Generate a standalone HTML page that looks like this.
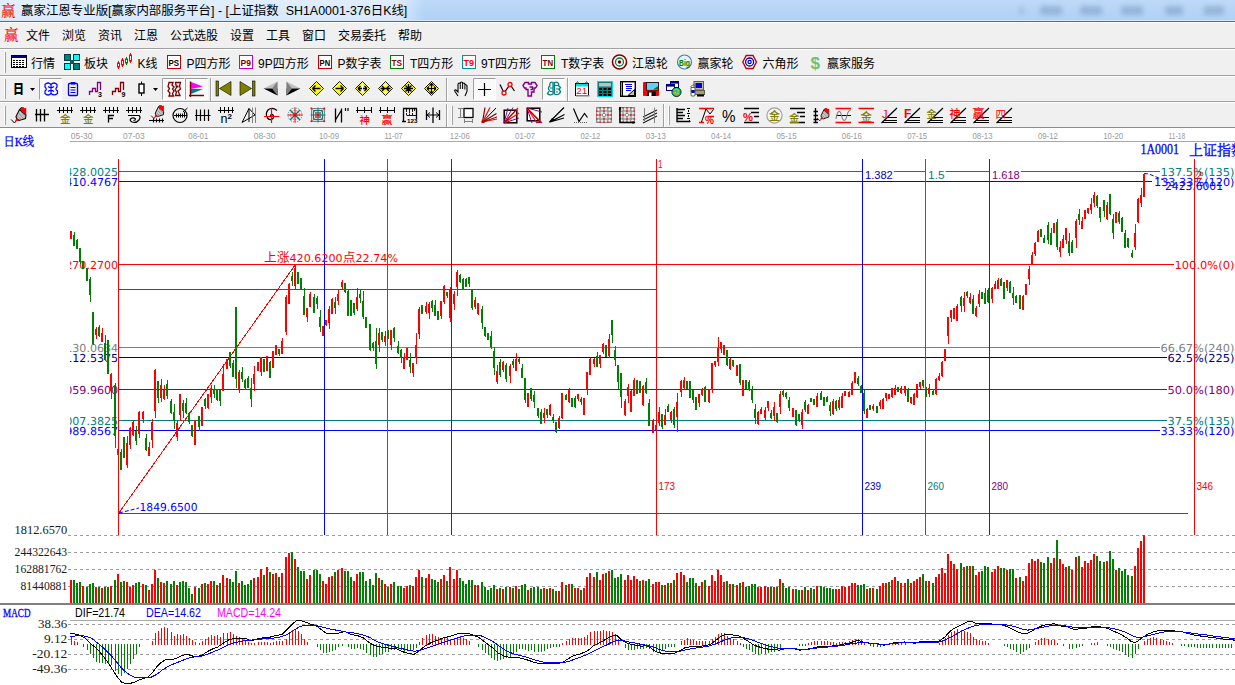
<!DOCTYPE html>
<html lang="zh-CN"><head><meta charset="utf-8"><title>赢家江恩专业版</title>
<style>
*{margin:0;padding:0;box-sizing:border-box}
html,body{width:1235px;height:685px;overflow:hidden;background:#f0f0f0}
body{position:relative;font-family:"Liberation Sans","Noto Sans CJK SC",sans-serif;font-size:12px;color:#000}
.abs{position:absolute}
#title{position:absolute;left:0;top:0;width:1235px;height:21px;background:linear-gradient(180deg,#bedaf8 0%,#b4d3f6 60%,#b2d2f5 100%)}
#title .glow{position:absolute;left:0;top:0;width:424px;height:21px;background:linear-gradient(90deg,rgba(255,255,255,.55) 0%,rgba(255,255,255,.5) 94%,rgba(255,255,255,0) 100%)}
#title .txt{position:absolute;left:21px;top:3px;height:17px;line-height:17px;font-size:12.45px;white-space:pre;color:#000}
#title .ic{position:absolute;left:1px;top:3px;font-size:14.5px;line-height:17px;color:#f00;font-family:"Liberation Serif","Noto Serif CJK SC",serif;font-weight:500}
.blur{position:absolute;top:6px;height:9px;background:#7f9fc6;filter:blur(2.4px);opacity:.6;border-radius:2px}
#tline{position:absolute;left:0;top:20px;width:1235px;height:3px;background:linear-gradient(180deg,#d4e6fa 0,#d4e6fa 33%,#5d6b7b 33%,#5d6b7b 67%,#fff 67%)}
#menu{position:absolute;left:0;top:23px;width:1235px;height:25px;background:#f0f0f0}
#menu span{position:absolute;top:5px;line-height:16px;font-size:12px;white-space:nowrap}
#menu .ic{left:4px;top:3px;font-size:14.5px;line-height:18px;color:#f00;font-family:"Liberation Serif","Noto Serif CJK SC",serif;font-weight:500}
.hl{position:absolute;left:0;width:1235px;height:1px}
.tb{position:absolute;left:0;width:1235px}
.tb .t{position:absolute;top:6px;line-height:16px;font-size:12px;white-space:nowrap}
.tb svg{position:absolute;overflow:visible}
.grip{position:absolute;width:3px;border-left:1px solid #fff;border-right:1px solid #a0a0a0;}
.sep{position:absolute;width:2px;border-left:1px solid #a0a0a0;border-right:1px solid #fff}
.pressed{position:absolute;border:1px solid;border-color:#a0a0a0 #fff #fff #a0a0a0;background:#f8f8f8}
svg.chart{position:absolute;left:0;top:128px}
</style></head><body>
<div id="title"><div class="glow"></div><span class="ic">赢</span><span class="txt">赢家江恩专业版[赢家内部服务平台] - [上证指数  SH1A0001-376日K线]</span>
<div class="blur" style="left:1020px;width:3px"></div>
<div class="blur" style="left:1040px;width:22px"></div>
<div class="blur" style="left:1080px;width:22px"></div>
<div class="blur" style="left:1121px;width:22px"></div>
<div class="blur" style="left:1165px;width:18px"></div>
<div class="blur" style="left:1204px;width:20px"></div>
</div><div id="tline"></div>
<div id="menu"><span class="ic">赢</span>
<span style="left:26px">文件</span>
<span style="left:62px">浏览</span>
<span style="left:98px">资讯</span>
<span style="left:134px">江恩</span>
<span style="left:170px">公式选股</span>
<span style="left:230px">设置</span>
<span style="left:266px">工具</span>
<span style="left:302px">窗口</span>
<span style="left:338px">交易委托</span>
<span style="left:398px">帮助</span>
</div>
<div class="hl" style="top:48px;background:#a0a0a0"></div>
<div class="hl" style="top:49px;background:#ffffff"></div>
<div class="hl" style="top:75px;background:#a0a0a0"></div>
<div class="hl" style="top:76px;background:#ffffff"></div>
<div class="hl" style="top:101px;background:#a0a0a0"></div>
<div class="hl" style="top:102px;background:#ffffff"></div>
<div class="hl" style="top:127px;background:#8c8c8c"></div>
<svg class="tbs" style="position:absolute;left:0;top:49px" width="1235" height="79" viewBox="0 0 1235 79"><path d="M4.5 3V24" stroke="#fff"/><path d="M5.5 3V24" stroke="#a0a0a0"/><path d="M4.5 30V50" stroke="#fff"/><path d="M5.5 30V50" stroke="#a0a0a0"/><path d="M4.5 57V76" stroke="#fff"/><path d="M5.5 57V76" stroke="#a0a0a0"/><g transform="translate(11,6)"><rect x="0.5" y="0.5" width="15" height="12" fill="#fff" stroke="#000"/><rect x="1" y="1" width="14" height="2" fill="#000080"/><rect x="2" y="5" width="2" height="1" fill="#000"/><rect x="2" y="7" width="2" height="1" fill="#000"/><rect x="2" y="9" width="2" height="1" fill="#000"/><rect x="2" y="11" width="2" height="1" fill="#000"/><rect x="5" y="5" width="2" height="1" fill="#000"/><rect x="5" y="7" width="2" height="1" fill="#000"/><rect x="5" y="9" width="2" height="1" fill="#000"/><rect x="5" y="11" width="2" height="1" fill="#000"/><rect x="8" y="5" width="2" height="1" fill="#000"/><rect x="8" y="7" width="2" height="1" fill="#000"/><rect x="8" y="9" width="2" height="1" fill="#000"/><rect x="8" y="11" width="2" height="1" fill="#000"/><rect x="11" y="5" width="2" height="1" fill="#000"/><rect x="11" y="7" width="2" height="1" fill="#000"/><rect x="11" y="9" width="2" height="1" fill="#000"/><rect x="11" y="11" width="2" height="1" fill="#000"/></g><g transform="translate(64,5)"><rect x="0" y="0" width="16" height="16" fill="#00c8c8"/><rect x="0.5" y="0.5" width="6" height="6" fill="#008080" stroke="#003c3c"/><rect x="9.5" y="0.5" width="6" height="6" fill="#00ffff" stroke="#003c3c"/><rect x="0.5" y="9.5" width="6" height="6" fill="#00ffff" stroke="#003c3c"/><rect x="9.5" y="9.5" width="6" height="6" fill="#008080" stroke="#003c3c"/><rect x="7" y="0" width="2" height="16" fill="#f0f0f0"/><rect x="0" y="7" width="16" height="2" fill="#f0f0f0"/><rect x="6" y="6" width="4" height="4" fill="#006060"/></g><g transform="translate(117,4)"><path d="M1.5 8V16" stroke="#f00" stroke-width="1" fill="none"/><rect x="0.5" y="10" width="2" height="4" fill="#fff" stroke="#f00"/><path d="M5.5 5V14" stroke="#f00" stroke-width="1" fill="none"/><rect x="4.5" y="7" width="2" height="5" fill="#fff" stroke="#f00"/><path d="M9.5 4V12" stroke="#008000" stroke-width="1" fill="none"/><rect x="8.5" y="6" width="2" height="4" fill="#fff" stroke="#008000"/><path d="M13.5 0V10" stroke="#f00" stroke-width="1" fill="none"/><rect x="12.5" y="2" width="2" height="6" fill="#fff" stroke="#f00"/></g><g transform="translate(167,6)"><rect x="0.5" y="0.5" width="13" height="13" fill="#fff" stroke="#f00"/><rect x="0.5" y="0.5" width="13" height="13" fill="none" stroke="#000" stroke-opacity=".45" stroke-dasharray="1 1"/><text x="1.6" y="10.5" fill="#000" font-size="8.2" font-family="Liberation Sans, Noto Sans CJK SC, sans-serif" font-weight="700" textLength="10.5" lengthAdjust="spacingAndGlyphs">PS</text></g><g transform="translate(239,6)"><rect x="0.5" y="0.5" width="13" height="13" fill="#fff" stroke="#f0f"/><rect x="0.5" y="0.5" width="13" height="13" fill="none" stroke="#000" stroke-opacity=".45" stroke-dasharray="1 1"/><text x="1.6" y="10.5" fill="#800000" font-size="8.2" font-family="Liberation Sans, Noto Sans CJK SC, sans-serif" font-weight="700" textLength="10.5" lengthAdjust="spacingAndGlyphs">P9</text></g><g transform="translate(318,6)"><rect x="0.5" y="0.5" width="13" height="13" fill="#fff" stroke="#f00"/><rect x="0.5" y="0.5" width="13" height="13" fill="none" stroke="#000" stroke-opacity=".45" stroke-dasharray="1 1"/><text x="1.6" y="10.5" fill="#000" font-size="8.2" font-family="Liberation Sans, Noto Sans CJK SC, sans-serif" font-weight="700" textLength="10.5" lengthAdjust="spacingAndGlyphs">PN</text></g><g transform="translate(390,6)"><rect x="0.5" y="0.5" width="13" height="13" fill="#fff" stroke="#00a000"/><rect x="0.5" y="0.5" width="13" height="13" fill="none" stroke="#000" stroke-opacity=".45" stroke-dasharray="1 1"/><text x="1.6" y="10.5" fill="#800000" font-size="8.2" font-family="Liberation Sans, Noto Sans CJK SC, sans-serif" font-weight="700" textLength="10.5" lengthAdjust="spacingAndGlyphs">TS</text></g><g transform="translate(462,6)"><rect x="0.5" y="0.5" width="13" height="13" fill="#fff" stroke="#00c0c0"/><rect x="0.5" y="0.5" width="13" height="13" fill="none" stroke="#000" stroke-opacity=".45" stroke-dasharray="1 1"/><text x="1.6" y="10.5" fill="#f00" font-size="8.2" font-family="Liberation Sans, Noto Sans CJK SC, sans-serif" font-weight="700" textLength="10.5" lengthAdjust="spacingAndGlyphs">T9</text></g><g transform="translate(541,6)"><rect x="0.5" y="0.5" width="13" height="13" fill="#fff" stroke="#00a000"/><rect x="0.5" y="0.5" width="13" height="13" fill="none" stroke="#000" stroke-opacity=".45" stroke-dasharray="1 1"/><text x="1.6" y="10.5" fill="#800000" font-size="8.2" font-family="Liberation Sans, Noto Sans CJK SC, sans-serif" font-weight="700" textLength="10.5" lengthAdjust="spacingAndGlyphs">TN</text></g><g transform="translate(612,5)"><circle cx="7.5" cy="8" r="7" fill="#fff" stroke="#800000" stroke-width="1.6"/><circle cx="7.5" cy="8" r="4" fill="#fff" stroke="#008040" stroke-width="1.3"/><circle cx="7.5" cy="8" r="1.8" fill="#800000"/></g><g transform="translate(677,5)"><circle cx="7.5" cy="8" r="7" fill="#e8f4f4" stroke="#4080a0" stroke-width="1.2"/><text x="2" y="11.5" fill="#008000" font-size="8.5" font-family="Liberation Sans, Noto Sans CJK SC, sans-serif" font-weight="700" textLength="11" lengthAdjust="spacingAndGlyphs">Big</text></g><g transform="translate(742,5)"><path d="M0.8 8L4.2 1.5H11L14.4 8L11 14.5H4.2Z" fill="#fff" stroke="#c00000" stroke-width="1.4"/><circle cx="7.6" cy="8" r="4" fill="#fff" stroke="#0000c0" stroke-width="1.3"/><circle cx="7.6" cy="8" r="1.6" fill="#fff" stroke="#0000c0" stroke-width="1.2"/></g><g transform="translate(810,5)"><text x="0.5" y="14.5" fill="#70c070" font-size="17" font-family="Liberation Sans, Noto Sans CJK SC, sans-serif" font-weight="700">$</text></g><text x="31" y="18.5" fill="#000" font-size="12" font-family="Liberation Sans, Noto Sans CJK SC, sans-serif" >行情</text><text x="84" y="18.5" fill="#000" font-size="12" font-family="Liberation Sans, Noto Sans CJK SC, sans-serif" >板块</text><text x="137.5" y="18.5" fill="#000" font-size="12" font-family="Liberation Sans, Noto Sans CJK SC, sans-serif" >K线</text><text x="186.5" y="18.5" fill="#000" font-size="12" font-family="Liberation Sans, Noto Sans CJK SC, sans-serif" >P四方形</text><text x="258" y="18.5" fill="#000" font-size="12" font-family="Liberation Sans, Noto Sans CJK SC, sans-serif" >9P四方形</text><text x="337.5" y="18.5" fill="#000" font-size="12" font-family="Liberation Sans, Noto Sans CJK SC, sans-serif" >P数字表</text><text x="410" y="18.5" fill="#000" font-size="12" font-family="Liberation Sans, Noto Sans CJK SC, sans-serif" >T四方形</text><text x="481" y="18.5" fill="#000" font-size="12" font-family="Liberation Sans, Noto Sans CJK SC, sans-serif" >9T四方形</text><text x="561" y="18.5" fill="#000" font-size="12" font-family="Liberation Sans, Noto Sans CJK SC, sans-serif" >T数字表</text><text x="632" y="18.5" fill="#000" font-size="12" font-family="Liberation Sans, Noto Sans CJK SC, sans-serif" >江恩轮</text><text x="697.5" y="18.5" fill="#000" font-size="12" font-family="Liberation Sans, Noto Sans CJK SC, sans-serif" >赢家轮</text><text x="762.5" y="18.5" fill="#000" font-size="12" font-family="Liberation Sans, Noto Sans CJK SC, sans-serif" >六角形</text><text x="827" y="18.5" fill="#000" font-size="12" font-family="Liberation Sans, Noto Sans CJK SC, sans-serif" >赢家服务</text><text x="13" y="43.8" fill="#000" font-size="13" font-family="Liberation Sans, Noto Sans CJK SC, sans-serif" font-weight="900" textLength="11" lengthAdjust="spacingAndGlyphs">日</text><path d="M30 39h5l-2.5 3z" fill="#000"/><rect x="39" y="29" width="23" height="22" fill="#fafafa"/><path d="M39.5 51V29.5H61.5" stroke="#a0a0a0" fill="none"/><path d="M39.5 50.5H61.5V30" stroke="#fff" fill="none"/><g transform="translate(43,32)"><path d="M2 3.5C4 1.5 6 1.5 8 3.5C10 1.5 12 1.5 14 3.5V6C12 8 13 9 14.5 10V12.5C12 14.5 10 14.5 8 12.5C6 14.5 4 14.5 2 12.5V10C3.5 9 4 8 2 6Z" stroke="#00f" stroke-width="1.2" fill="none"/><path d="M5 5.5C7 7 9 7 11 5.5M5 10.5C7 9 9 9 11 10.5M8 3.5V12.5" stroke="#00f" stroke-width="1.1" fill="none"/></g><g transform="translate(66,32)"><path d="M2.5 3.5Q2.5 2.5 3.5 2.5H10.5Q11.5 2.5 11.5 3.5V13.5Q11.5 14.5 10.5 14.5H3.5Q2.5 14.5 2.5 13.5Z" stroke="#00f" stroke-width="1.3" fill="none"/><path d="M5 1.5H9V3H5Z" stroke="#00f" stroke-width="1" fill="none"/><path d="M4.5 6.5H9.5M4.5 9H9.5M4.5 11.5H9.5" stroke="#00f" stroke-width="1.2" fill="none"/></g><g transform="translate(88,32)"><path d="M1.5 14V10.5H4.5V7.5H7.5V10.5H9.5V1.5H12.5V9" stroke="#800080" stroke-width="1.3" fill="none"/><text x="10" y="15.5" fill="#000" font-size="7" font-family="Liberation Sans, Noto Sans CJK SC, sans-serif" font-weight="700">3</text></g><g transform="translate(111,32)"><path d="M1.5 14V10.5H4.5V7.5H7.5V10.5H9.5V1.5H12.5V9" stroke="#800000" stroke-width="1.3" fill="none"/><text x="10.5" y="15.5" fill="#000" font-size="7" font-family="Liberation Sans, Noto Sans CJK SC, sans-serif" font-weight="700">9</text></g><g transform="translate(138,32)"><path d="M3.5 0.5V15" stroke="#000" stroke-width="1" fill="none"/><rect x="1" y="3" width="5" height="9" fill="#fff" stroke="#000" stroke-width="1.4"/></g><path d="M153 39h5l-2.5 3z" fill="#000"/><rect x="162" y="29" width="23" height="22" fill="#fafafa"/><path d="M162.5 51V29.5H184.5" stroke="#a0a0a0" fill="none"/><path d="M162.5 50.5H184.5V30" stroke="#fff" fill="none"/><rect x="185" y="29" width="23" height="22" fill="#fafafa"/><path d="M185.5 51V29.5H207.5" stroke="#a0a0a0" fill="none"/><path d="M185.5 50.5H207.5V30" stroke="#fff" fill="none"/><g transform="translate(166,32)"><path d="M3 1.5H7L6 4L8 6L6.5 8L8 10L6.5 12.5L7.5 15H3L4 12L2 10L3.5 7.5L2 5.5Z" stroke="#800000" stroke-width="1.3" fill="none"/><path d="M9.5 1.5H14.5L13.5 5L14.5 8L12 10L14 14.5H9.5L10.5 11L9 9L10.5 6.5Z" stroke="#800000" stroke-width="1.3" fill="none"/><rect x="10.5" y="4.5" width="2" height="2" fill="#800000"/></g><g transform="translate(189,32)"><path d="M2 1L14 5.5L2 8Z" fill="#ff00ff"/><path d="M2 8L14 8L2 13Z" fill="#008080"/><path d="M1.5 0.5V16M0 14.5H15" stroke="#800000" stroke-width="1.4" fill="none"/></g><path d="M210.5 29V52" stroke="#a0a0a0"/><path d="M211.5 29V52" stroke="#fff"/><g transform="translate(216,32)"><rect x="0" y="0" width="2.5" height="15" fill="#808000" stroke="#000" stroke-width=".6"/><path d="M15 0.5V14.5L3.5 7.5Z" fill="#808000" stroke="#000" stroke-width=".6"/></g><g transform="translate(240,32)"><rect x="12.5" y="0" width="2.5" height="15" fill="#808000" stroke="#000" stroke-width=".6"/><path d="M0 0.5V14.5L11.5 7.5Z" fill="#808000" stroke="#000" stroke-width=".6"/></g><g transform="translate(263,32)"><path d="M14.5 0.5L0.5 7.5L14.5 7.5Z" fill="#c0c0c0"/><path d="M0.5 7.5L14.5 14.5V7.5Z" fill="#000"/><path d="M14.5 0.5V14.5L9 7.5Z" fill="#808080"/></g><g transform="translate(286,32)"><path d="M0.5 0.5L14.5 7.5L0.5 7.5Z" fill="#c0c0c0"/><path d="M14.5 7.5L0.5 14.5V7.5Z" fill="#000"/><path d="M0.5 0.5V14.5L6 7.5Z" fill="#808080"/></g><g transform="translate(308.5,31.5)"><path d="M8 1L15 8L8 15L1 8Z" fill="#ffff00" stroke="#000" stroke-width=".9"/><path d="M4 8H12M4 8l3-3M4 8l3 3" stroke="#000" stroke-width="1.4" fill="none"/></g><g transform="translate(331.5,31.5)"><path d="M8 1L15 8L8 15L1 8Z" fill="#ffff00" stroke="#000" stroke-width=".9"/><path d="M4 8H12M12 8l-3-3M12 8l-3 3" stroke="#000" stroke-width="1.4" fill="none"/></g><g transform="translate(354.5,31.5)"><path d="M8 1L15 8L8 15L1 8Z" fill="#ffff00" stroke="#000" stroke-width=".9"/><path d="M3.5 8H12.5M3.5 8l2.5-2.5M3.5 8l2.5 2.5M12.5 8l-2.5-2.5M12.5 8l-2.5 2.5" stroke="#000" stroke-width="1.4" fill="none"/><path d="M8 3V13" stroke="#fff" stroke-width="1" fill="none"/></g><g transform="translate(377.5,31.5)"><path d="M8 1L15 8L8 15L1 8Z" fill="#ffff00" stroke="#000" stroke-width=".9"/><path d="M3 8H13M7 8l-2.5-2.5M7 8l-2.5 2.5M9 8l2.5-2.5M9 8l2.5 2.5" stroke="#000" stroke-width="1.4" fill="none"/><circle cx="8" cy="4" r="1" fill="#fff"/><circle cx="8" cy="12" r="1" fill="#fff"/></g><g transform="translate(400.5,31.5)"><path d="M8 1L15 8L8 15L1 8Z" fill="#ffff00" stroke="#000" stroke-width=".9"/><path d="M3.5 8H12.5M8 3.5V12.5M5 5L11 11M11 5L5 11" stroke="#000" stroke-width="1.3" fill="none"/></g><g transform="translate(423.5,31.5)"><path d="M8 1L15 8L8 15L1 8Z" fill="#ffff00" stroke="#000" stroke-width=".9"/><path d="M3.5 8H12.5M8 3.5V12.5M8 3l-2 2.2M8 3l2 2.2M8 13l-2-2.2M8 13l2-2.2M3.5 8l2-2M3.5 8l2 2M12.5 8l-2-2M12.5 8l-2 2" stroke="#000" stroke-width="1.2" fill="none"/></g><path d="M446.5 29V52" stroke="#a0a0a0"/><path d="M447.5 29V52" stroke="#fff"/><g transform="translate(453,32)"><path d="M5 15L2 10.5Q1 8.5 3 9L5 11V3.5Q5 2 6.2 2Q7.3 2 7.3 3.5V2.3Q7.3 1 8.5 1Q9.6 1 9.6 2.3V3Q9.6 2 10.8 2Q11.9 2 11.9 3.2V4.5Q11.9 3.5 13 3.7Q14 4 14 5V10.5L12 15" stroke="#000" stroke-width="1.1" fill="none"/><path d="M7.3 3.5V8M9.6 3V8M11.9 4.5V8.5" stroke="#000" stroke-width="1" fill="none"/></g><rect x="473" y="29" width="23" height="22" fill="#fafafa"/><path d="M473.5 51V29.5H495.5" stroke="#a0a0a0" fill="none"/><path d="M473.5 50.5H495.5V30" stroke="#fff" fill="none"/><g transform="translate(477,32)"><path d="M7.5 2V15M1 8.5H14" stroke="#000" stroke-width="1.2" fill="none"/></g><g transform="translate(499,32)"><path d="M1 3.5L5 12L11 3.5L15.5 10" stroke="#000" stroke-width="1.2" fill="none"/><circle cx="5" cy="12" r="2" fill="#fff" stroke="#f00" stroke-width="1.3"/><circle cx="11" cy="3.5" r="2" fill="#fff" stroke="#f00" stroke-width="1.3"/></g><g transform="translate(522,32)"><path d="M3 1.5H6.5V3H9.5V1.5H13L15 4.5L13.5 7H12V11H9.5V15H6V8.5H4V7H2.5L1 4.5Z" stroke="#800080" stroke-width="1.4" fill="none"/><path d="M7.5 6H10.5V8.5H8.5" stroke="#800080" stroke-width="1.3" fill="none"/></g><rect x="542" y="29" width="23" height="22" fill="#fafafa"/><path d="M542.5 51V29.5H564.5" stroke="#a0a0a0" fill="none"/><path d="M542.5 50.5H564.5V30" stroke="#fff" fill="none"/><g transform="translate(546,32)"><path d="M7.5 1.5C5 0.5 3 2 4 4.5C2.5 6 1.5 8 3.5 9.5L1.5 12.5C3 14.5 5 14 7 13V1.5M8.5 1.5C11 0.5 13.5 2 12.5 4.5L14.5 6.5L13 8.5L14.5 10.5C14 13 11.5 14.5 8.5 13Z" stroke="#008080" stroke-width="1.3" fill="none"/><path d="M4 7H7M9 4.5H12M10 8H13M4 10.5H6.5M10 11H12" stroke="#008080" stroke-width="1.1" fill="none"/></g><path d="M567.5 29V52" stroke="#a0a0a0"/><path d="M568.5 29V52" stroke="#fff"/><g transform="translate(575,32)"><rect x="0.5" y="2.5" width="13" height="12" fill="#fff" stroke="#000"/><rect x="1" y="3" width="12" height="2.5" fill="#00e0e0"/><rect x="1" y="14" width="13.5" height="1.5" fill="#808080"/><path d="M2.5 0.5l1.5 2h-3zM11.5 0.5l1.5 2h-3z" fill="#c0c0c0" stroke="#000" stroke-width=".5"/><text x="1.3" y="13.3" fill="#f00" font-size="8.8" font-family="Liberation Sans, Noto Sans CJK SC, sans-serif" textLength="11" lengthAdjust="spacingAndGlyphs">21</text></g><g transform="translate(597,32)"><rect x="0.5" y="0.5" width="15" height="15" fill="#008080" stroke="#00e0e0"/><rect x="2" y="2" width="12" height="3.5" fill="#c0c0c0"/><rect x="2" y="7" width="3" height="2" fill="#000"/><rect x="2" y="10" width="3" height="2" fill="#000"/><rect x="2" y="13" width="3" height="2" fill="#000"/><rect x="6.5" y="7" width="3" height="2" fill="#000"/><rect x="6.5" y="10" width="3" height="2" fill="#000"/><rect x="6.5" y="13" width="3" height="2" fill="#000"/><rect x="11" y="7" width="3" height="2" fill="#000"/><rect x="11" y="10" width="3" height="2" fill="#000"/><rect x="11" y="13" width="3" height="2" fill="#000"/></g><g transform="translate(620,32)"><rect x="0.7" y="0.7" width="14.6" height="14.6" fill="#fff" stroke="#000" stroke-width="1.4"/><path d="M2.5 1V15" stroke="#000" stroke-width="1" fill="none"/><path d="M5 3.5H12M6 5.5H12M6 7.5H12M6 9.5H11" stroke="#00f" stroke-width="1" fill="none"/><path d="M8 14.5L14.5 8.5V14.5Z" stroke="#000" stroke-width="1" fill="#c0c0c0"/></g><g transform="translate(643,32)"><rect x="0" y="1" width="16" height="14" rx="1" fill="#f00"/><rect x="3.5" y="1.5" width="12" height="7.5" fill="#fff" stroke="#000" stroke-width=".8"/><path d="M4 2H15V5L11 8.5H4Z" fill="#60d0ff"/><path d="M15 5V8.5H10Z" fill="#008000"/><rect x="4" y="10.5" width="9" height="4.5" fill="#000"/><rect x="6" y="11.5" width="2.5" height="3.5" fill="#fff"/></g><g transform="translate(666,32)"><rect x="4.5" y="0.5" width="8" height="6" fill="#fff" stroke="#000080"/><rect x="5" y="1" width="7" height="1.6" fill="#000080"/><rect x="0.5" y="3.5" width="8" height="6" fill="#fff" stroke="#000080"/><rect x="1" y="4" width="7" height="1.6" fill="#000080"/><circle cx="10.5" cy="11" r="4.6" fill="#00c0c0" stroke="#000" stroke-width=".8"/><path d="M8 9.5L10.5 8L12.5 9.5L11.5 12L13 13.5M7 12L9.5 11.5L10.5 14" stroke="#c0c000" stroke-width="1.4" fill="none"/></g><g transform="translate(689,32)"><rect x="5" y="0.5" width="9.5" height="8.5" fill="#c0c0a0" stroke="#606040"/><rect x="6.5" y="2" width="6.5" height="5" fill="#0000e0"/><rect x="4" y="9.5" width="11.5" height="4" fill="#a0a080" stroke="#606040"/><rect x="8" y="13.5" width="7" height="2" fill="#000"/><path d="M2 6.5H6V14.5Q4 16 2 14.5Z" fill="#fff" stroke="#606040"/><rect x="2.3" y="9" width="3.4" height="3" fill="#0000c0"/><path d="M1.5 6L4 3.5L6 5" stroke="#606040" fill="none"/></g><g transform="translate(11,58)"><path d="M8.5 2.5L15 8L14.5 11.5L8 13.5L5.5 11.5L5 9.5Z" fill="#c4c4c4" stroke="#000" stroke-width="1.1"/><path d="M7.5 6L12 11M9.5 4.5L14 9.5M6.5 9L10 12.5" stroke="#8a8a8a" stroke-width=".8"/><path d="M8.5 2.5L10.5 0.3L12.5 0L13.2 1.2L15.2 0.8V8Z" fill="#f00"/><path d="M8.5 2.5L10.5 0.3" stroke="#000" stroke-width="1"/><path d="M5.3 11.3L8 13.5L3.8 14.8Z" fill="#f00"/><path d="M0.2 12.5L3.5 16L4.6 14.4" stroke="#000" stroke-width="1" fill="none"/></g><g transform="translate(34,58)"><path d="M2.5 2V14.5M6.5 2V14.5M10.5 2V14.5M1 7.5H15" stroke="#000" stroke-width="1.3" fill="none"/></g><g transform="translate(57,58)"><path d="M0 3.5H16" stroke="#000" stroke-width="1" fill="none"/><path d="M2.5 0V6" stroke="#000" stroke-width="1" fill="none"/><path d="M6.5 0V6" stroke="#000" stroke-width="1" fill="none"/><path d="M10.5 0V6" stroke="#000" stroke-width="1" fill="none"/><path d="M14.5 0V6" stroke="#000" stroke-width="1" fill="none"/><text x="3" y="16" fill="#808000" font-size="10.5" font-family="Liberation Sans, Noto Sans CJK SC, sans-serif" font-weight="500">金</text></g><g transform="translate(80,58)"><path d="M0 3.5H16" stroke="#000" stroke-width="1" fill="none"/><path d="M2.5 0V6" stroke="#000" stroke-width="1" fill="none"/><path d="M6.5 0V6" stroke="#000" stroke-width="1" fill="none"/><path d="M10.5 0V6" stroke="#000" stroke-width="1" fill="none"/><path d="M14.5 0V6" stroke="#000" stroke-width="1" fill="none"/><text x="3" y="16" fill="#808000" font-size="10.5" font-family="Liberation Sans, Noto Sans CJK SC, sans-serif" font-weight="500">金</text></g><g transform="translate(103,58)"><path d="M0 3.5H16" stroke="#000" stroke-width="1" fill="none"/><path d="M2.5 0V6" stroke="#000" stroke-width="1" fill="none"/><path d="M6.5 0V6" stroke="#000" stroke-width="1" fill="none"/><path d="M10.5 0V6" stroke="#000" stroke-width="1" fill="none"/><path d="M14.5 0V6" stroke="#000" stroke-width="1" fill="none"/><path d="M5.5 15.5V8.5H11M5.5 11.5H10" stroke="#000" stroke-width="1.3" fill="none"/></g><g transform="translate(126,58)"><path d="M0 3.5H16" stroke="#000" stroke-width="1" fill="none"/><path d="M2.5 0V6" stroke="#000" stroke-width="1" fill="none"/><path d="M6.5 0V6" stroke="#000" stroke-width="1" fill="none"/><path d="M10.5 0V6" stroke="#000" stroke-width="1" fill="none"/><path d="M14.5 0V6" stroke="#000" stroke-width="1" fill="none"/><path d="M2 8.5H13Q15 10 13 13Q10 16.5 6 15Q3 13.5 5 11.5Q7.5 10 9.5 12Q9.5 13.5 7.5 13.5" stroke="#000" stroke-width="1.2" fill="none"/></g><g transform="translate(149,57)"><g transform="translate(2,-1) scale(.85)"><path d="M8.5 2.5L15 8L14.5 11.5L8 13.5L5.5 11.5L5 9.5Z" fill="#c4c4c4" stroke="#000" stroke-width="1.1"/><path d="M7.5 6L12 11M9.5 4.5L14 9.5M6.5 9L10 12.5" stroke="#8a8a8a" stroke-width=".8"/><path d="M8.5 2.5L10.5 0.3L12.5 0L13.2 1.2L15.2 0.8V8Z" fill="#f00"/><path d="M8.5 2.5L10.5 0.3" stroke="#000" stroke-width="1"/><path d="M5.3 11.3L8 13.5L3.8 14.8Z" fill="#f00"/><path d="M0.2 12.5L3.5 16L4.6 14.4" stroke="#000" stroke-width="1" fill="none"/></g><path d="M0 14.5H15M4.5 12.5V16.5M7.5 12.5V16.5M10.5 12.5V16.5M13.5 12.5V16.5" stroke="#000" stroke-width="1.1" fill="none"/></g><g transform="translate(172,58)"><circle cx="8" cy="8.5" r="7" fill="none" stroke="#000" stroke-width="1.2"/><path d="M2 8.5H15M4.5 6.5V10.5M6.5 6.5V10.5M8.5 6.5V10.5M10.5 6.5V10.5M12.5 5V10.5M11 5L15.5 1" stroke="#000" stroke-width="1" fill="none"/></g><g transform="translate(195,58)"><path d="M1.5 2.5V14M5.5 2.5V14M9.5 2.5V14M13.5 2.5V14M0 8.5H15.5" stroke="#000" stroke-width="1.2" fill="none"/></g><g transform="translate(218,58)"><path d="M0 3.5H16" stroke="#000" stroke-width="1" fill="none"/><path d="M2.5 0V6" stroke="#000" stroke-width="1" fill="none"/><path d="M6.5 0V6" stroke="#000" stroke-width="1" fill="none"/><path d="M10.5 0V6" stroke="#000" stroke-width="1" fill="none"/><path d="M14.5 0V6" stroke="#000" stroke-width="1" fill="none"/><text x="2.5" y="15.5" fill="#000" font-size="12.5" font-family="Liberation Sans, Noto Sans CJK SC, sans-serif" >n</text><text x="9.5" y="12" fill="#000" font-size="8" font-family="Liberation Sans, Noto Sans CJK SC, sans-serif" font-weight="700">2</text></g><g transform="translate(241,58)"><path d="M1 15.5L8 1.5L14 8L1 15.5M8 1.5V15" stroke="#000" stroke-width="1" fill="none"/><path d="M11.5 0.5V16M14.5 0.5V16" stroke="#808080" stroke-width="1" fill="none"/></g><g transform="translate(264,58)"><path d="M13 3.5Q8 -0.5 4 3Q1 6.5 3.5 11Q6 14 9 11.5Q10.5 9 8.5 7.5Q6.5 7 6.5 9" stroke="#000" stroke-width="1.2" fill="none"/><path d="M0 9.5H15.5M7.5 1V16" stroke="#f00" stroke-width="1.2" fill="none"/></g><g transform="translate(287,58)"><circle cx="8" cy="8" r="7" fill="none" stroke="#008080" stroke-width=".8" stroke-dasharray="1 1"/><circle cx="8" cy="8" r="4.5" fill="none" stroke="#f00" stroke-width=".8" stroke-dasharray="1 1"/><circle cx="8" cy="8" r="2" fill="none" stroke="#008080" stroke-width=".8" stroke-dasharray="1 1"/><path d="M0.5 8H15.5M8 0.5V15.5" stroke="#f00" stroke-width="1" fill="none"/><path d="M3 3L13 13M13 3L3 13" stroke="#008080" stroke-width="1.4" fill="none"/><rect x="6.5" y="6.5" width="3" height="3" fill="#f00"/></g><g transform="translate(310,58)"><rect x="1.5" y="1.5" width="13" height="13" fill="#d8d8d8" stroke="#808080"/><rect x="3.5" y="3.5" width="9" height="9" fill="none" stroke="#008080"/><rect x="5.5" y="5.5" width="5" height="5" fill="none" stroke="#808080"/><path d="M0.5 8H15.5M8 0.5V15.5" stroke="#008080" stroke-width="1" fill="none"/><path d="M1.5 1.5L14.5 14.5M14.5 1.5L1.5 14.5" stroke="#808080" stroke-width="0.8" fill="none"/><rect x="6.5" y="6.5" width="3" height="3" fill="#f00"/><rect x="0.5" y="0.5" width="1.6" height="1.6" fill="#f00"/><rect x="0.5" y="13.5" width="1.6" height="1.6" fill="#f00"/><rect x="13.5" y="0.5" width="1.6" height="1.6" fill="#f00"/><rect x="13.5" y="13.5" width="1.6" height="1.6" fill="#f00"/></g><g transform="translate(333,58)"><path d="M2.5 1.5V15.5M2.5 13L8.5 3M8.5 1.5V15.5" stroke="#000" stroke-width="1.3" fill="none"/><path d="M12.5 1V4M15 1V4" stroke="#000" stroke-width="1.2" fill="none"/></g><g transform="translate(356,58)"><path d="M0 3.5H16" stroke="#000" stroke-width="1" fill="none"/><path d="M1.5 0V6" stroke="#000" stroke-width="1" fill="none"/><path d="M8.5 0V6" stroke="#000" stroke-width="1" fill="none"/><path d="M15.5 0V6" stroke="#000" stroke-width="1" fill="none"/><text x="3.5" y="16.5" fill="#f00" font-size="10.5" font-family="Liberation Sans, Noto Sans CJK SC, sans-serif" font-weight="500">神</text></g><g transform="translate(379,58)"><path d="M0 3.5H16" stroke="#000" stroke-width="1" fill="none"/><path d="M1.5 0V6" stroke="#000" stroke-width="1" fill="none"/><path d="M8.5 0V6" stroke="#000" stroke-width="1" fill="none"/><path d="M15.5 0V6" stroke="#000" stroke-width="1" fill="none"/><text x="2.5" y="16.5" fill="#f00" font-size="11" font-family="Liberation Sans, Noto Sans CJK SC, sans-serif" font-weight="500">赢</text></g><g transform="translate(402,58)"><path d="M1 1.5H15M1.5 1.5V15M14.5 1.5V12M0 14.5H4" stroke="#000" stroke-width="1.3" fill="none"/><path d="M4.5 2V5M7.5 2V6M10.5 2V5M4.5 8.5H14M4.5 6V8M7.5 6.5V8M10.5 6V8M12.5 2V4" stroke="#000" stroke-width="0.9" fill="none"/><text x="5" y="15.8" fill="#000" font-size="5.5" font-family="Liberation Sans, Noto Sans CJK SC, sans-serif" font-weight="700" textLength="10.5" lengthAdjust="spacingAndGlyphs">123</text></g><g transform="translate(425,58)"><path d="M1.5 3V13M14.5 3V13M8 0.5V16" stroke="#000" stroke-width="1.3" fill="none"/><path d="M2 8H14M2 8l3-2.5M2 8l3 2.5M14 8l-3-2.5M14 8l-3 2.5" stroke="#000" stroke-width="1" fill="none"/></g><path d="M446.5 55V78" stroke="#a0a0a0"/><path d="M447.5 55V78" stroke="#fff"/><path d="M451.5 57V76" stroke="#fff"/><path d="M452.5 57V76" stroke="#a0a0a0"/><g transform="translate(458,58)"><rect x="6" y="1.5" width="9" height="9" fill="#fff" stroke="#000" stroke-width="1.3"/><path d="M0 1.5H5M0 10.5H5M2.5 1.5V10.5M6.5 12V16M14.5 12V16M6.5 14.5H14.5" stroke="#808080" stroke-width="1" fill="none"/></g><g transform="translate(481,58)"><path d="M1.5 15L15 1" stroke="#000" stroke-width="1" fill="none"/><path d="M1.5 15L4 0.5M1.5 15L15.5 6.5" stroke="#800000" stroke-width="1.2" fill="none"/><path d="M1.5 15L9 0.5M1.5 15L16 12" stroke="#f00" stroke-width="1.2" fill="none"/><path d="M1.5 15L16 10" stroke="#800000" stroke-width="1" fill="none"/><rect x="0.5" y="13.5" width="3" height="2.5" fill="#c00000"/></g><g transform="translate(503,58)"><rect x="1.2" y="3.2" width="12.6" height="12.6" fill="#fff" stroke="#000" stroke-width="1.5"/><path d="M1 16L5 1M1 16L16 11M1 16L10 0.5" stroke="#800080" stroke-width="1" fill="none"/><path d="M1 16L15 1M1 16L16 6" stroke="#f00" stroke-width="1.2" fill="none"/><path d="M1 16L13 3" stroke="#800000" stroke-width="1" fill="none"/></g><g transform="translate(526,58)"><rect x="1.2" y="1.2" width="12.6" height="12.6" fill="#fff" stroke="#000" stroke-width="1.5"/><path d="M1 1L6 16M1 1L16 5M10 15.5H16" stroke="#800080" stroke-width="1" fill="none"/><path d="M1 1L16 16M1 1L11 16" stroke="#f00" stroke-width="1.2" fill="none"/><path d="M1 1L14 15" stroke="#800000" stroke-width="1" fill="none"/></g><g transform="translate(549,58)"><path d="M0.5 15L15 0.5M1 15L15.5 7.5M1 15L15 11" stroke="#000" stroke-width="1.2" fill="none"/><path d="M0 16L5.5 12.5L3 11Z" fill="#000"/></g><g transform="translate(572,58)"><path d="M1.5 1.5L7 14.5L12.5 6.5L15.5 10.5" stroke="#000" stroke-width="1.2" fill="none"/><path d="M1 15.5H16" stroke="#606060" stroke-width="1" fill="none"/><path d="M1 15.5H16" stroke="#f0f0f0" stroke-dasharray="1 1"/></g><g transform="translate(596,58)"><rect x="0.5" y="0.5" width="15" height="15" fill="#e4e4e4" stroke="#909090"/><path d="M4 0.5V15.5M8 0.5V15.5M12 0.5V15.5M0.5 4H15.5M0.5 8H15.5M0.5 12H15.5" stroke="#808080" stroke-width="1" fill="none"/><rect x="7.3" y="0.10000000000000009" width="1.4" height="1.4" fill="#f00"/><rect x="0.10000000000000009" y="7.3" width="1.4" height="1.4" fill="#f00"/><rect x="14.5" y="7.3" width="1.4" height="1.4" fill="#f00"/><rect x="7.3" y="14.5" width="1.4" height="1.4" fill="#f00"/><rect x="7.3" y="3.3" width="1.4" height="1.4" fill="#f00"/><rect x="3.3" y="7.3" width="1.4" height="1.4" fill="#f00"/><rect x="11.3" y="7.3" width="1.4" height="1.4" fill="#f00"/><rect x="7.3" y="11.3" width="1.4" height="1.4" fill="#f00"/><rect x="7.3" y="7.3" width="1.4" height="1.4" fill="#f00"/><rect x="3.3" y="0.10000000000000009" width="1.4" height="1.4" fill="#f00"/><rect x="11.3" y="0.10000000000000009" width="1.4" height="1.4" fill="#f00"/><rect x="3.3" y="14.5" width="1.4" height="1.4" fill="#f00"/><rect x="11.3" y="14.5" width="1.4" height="1.4" fill="#f00"/><rect x="0.10000000000000009" y="3.3" width="1.4" height="1.4" fill="#f00"/><rect x="0.10000000000000009" y="11.3" width="1.4" height="1.4" fill="#f00"/><rect x="14.5" y="3.3" width="1.4" height="1.4" fill="#f00"/><rect x="14.5" y="11.3" width="1.4" height="1.4" fill="#f00"/><circle cx="2.5" cy="2.5" r="1.6" fill="#fff" stroke="#707070" stroke-width=".7"/><circle cx="13.5" cy="2.5" r="1.6" fill="#fff" stroke="#707070" stroke-width=".7"/><circle cx="2.5" cy="13.5" r="1.6" fill="#fff" stroke="#707070" stroke-width=".7"/><circle cx="13.5" cy="13.5" r="1.6" fill="#fff" stroke="#707070" stroke-width=".7"/><circle cx="8" cy="8" r="1.6" fill="#fff" stroke="#707070" stroke-width=".7"/></g><g transform="translate(619,58)"><rect x="0.5" y="0.5" width="15" height="15" fill="#e4e4e4" stroke="#909090"/><path d="M4 0.5V15.5M8 0.5V15.5M12 0.5V15.5M0.5 4H15.5M0.5 8H15.5M0.5 12H15.5" stroke="#808080" stroke-width="1" fill="none"/><rect x="7.3" y="0.10000000000000009" width="1.4" height="1.4" fill="#f00"/><rect x="0.10000000000000009" y="7.3" width="1.4" height="1.4" fill="#f00"/><rect x="14.5" y="7.3" width="1.4" height="1.4" fill="#f00"/><rect x="7.3" y="14.5" width="1.4" height="1.4" fill="#f00"/><rect x="7.3" y="3.3" width="1.4" height="1.4" fill="#f00"/><rect x="3.3" y="7.3" width="1.4" height="1.4" fill="#f00"/><rect x="11.3" y="7.3" width="1.4" height="1.4" fill="#f00"/><rect x="7.3" y="11.3" width="1.4" height="1.4" fill="#f00"/><rect x="7.3" y="7.3" width="1.4" height="1.4" fill="#f00"/><rect x="3.3" y="0.10000000000000009" width="1.4" height="1.4" fill="#f00"/><rect x="11.3" y="0.10000000000000009" width="1.4" height="1.4" fill="#f00"/><rect x="3.3" y="14.5" width="1.4" height="1.4" fill="#f00"/><rect x="11.3" y="14.5" width="1.4" height="1.4" fill="#f00"/><rect x="0.10000000000000009" y="3.3" width="1.4" height="1.4" fill="#f00"/><rect x="0.10000000000000009" y="11.3" width="1.4" height="1.4" fill="#f00"/><rect x="14.5" y="3.3" width="1.4" height="1.4" fill="#f00"/><rect x="14.5" y="11.3" width="1.4" height="1.4" fill="#f00"/><circle cx="2.5" cy="2.5" r="1.6" fill="#fff" stroke="#707070" stroke-width=".7"/><circle cx="13.5" cy="2.5" r="1.6" fill="#fff" stroke="#707070" stroke-width=".7"/><circle cx="2.5" cy="13.5" r="1.6" fill="#fff" stroke="#707070" stroke-width=".7"/><circle cx="13.5" cy="13.5" r="1.6" fill="#fff" stroke="#707070" stroke-width=".7"/><circle cx="8" cy="8" r="1.6" fill="#fff" stroke="#707070" stroke-width=".7"/><path d="M1 0V15.5H16" stroke="#000" stroke-width="1.4" fill="none"/><path d="M1 -0.5l-1.5 3h3zM16.5 15.5l-3-1.5v3z" fill="#000"/></g><g transform="translate(642,58)"><path d="M1 10L15 3M1 13L15 6M1 16L15 9" stroke="#202020" stroke-width="1.2" fill="none"/><path d="M2.5 1V14M12.5 0.5V16" stroke="#808080" stroke-width="1" fill="none"/></g><path d="M663.5 55V78" stroke="#a0a0a0"/><path d="M664.5 55V78" stroke="#fff"/><path d="M668.5 57V76" stroke="#fff"/><path d="M669.5 57V76" stroke="#a0a0a0"/><g transform="translate(675,58)"><path d="M2 1V14.5H15M2 2.5H10M2 5.5H8M2 8.5H10M2 11.5H8" stroke="#000" stroke-width="1.4" fill="none"/><path d="M12 1.5H15M13.5 3V5M12 6.5H15M13.5 8V10M12 11.5H15M14 13l1.5 1.5" stroke="#000" stroke-width="1" fill="none"/></g><g transform="translate(698,58)"><path d="M1 1.5H16M1 15.5H6M10 9.5H16" stroke="#f00" stroke-width="1.3" fill="none"/><path d="M3.5 15L8 2L12 7L15.5 2.5" stroke="#000" stroke-width="1" fill="none"/><text x="7" y="16.5" fill="#f00" font-size="10" font-family="Liberation Sans, Noto Sans CJK SC, sans-serif" font-weight="700" textLength="9" lengthAdjust="spacingAndGlyphs">%</text></g><g transform="translate(722,58)"><text x="0" y="15" fill="#000" font-size="16" font-family="Liberation Sans, Noto Sans CJK SC, sans-serif" textLength="13.5" lengthAdjust="spacingAndGlyphs">%</text></g><g transform="translate(743,58)"><path d="M1 1.5H16M8 5.5H16M11 9.5H16M1 15.5H16" stroke="#000" stroke-width="1.4" fill="none"/><text x="0" y="14" fill="#f00" font-size="10.5" font-family="Liberation Sans, Noto Sans CJK SC, sans-serif" font-weight="700" textLength="10" lengthAdjust="spacingAndGlyphs">%</text></g><g transform="translate(766,58)"><circle cx="8.5" cy="8.5" r="7.6" fill="#f6f6f6" stroke="#a0a0a0" stroke-width="1.2"/><text x="3" y="13" fill="#808000" font-size="11" font-family="Liberation Sans, Noto Sans CJK SC, sans-serif" font-weight="500">金</text></g><g transform="translate(789,58)"><path d="M1 1.5H16M8 5.5H16M11 9.5H16M1 15.5H16" stroke="#000" stroke-width="1.4" fill="none"/><text x="0" y="14.5" fill="#808000" font-size="10.5" font-family="Liberation Sans, Noto Sans CJK SC, sans-serif" font-weight="500">金</text></g><g transform="translate(813,58)"><path d="M2.5 1V16M0.5 4.5H5M0.5 8.5H5M0.5 12.5H5M0.5 15.5H5" stroke="#000" stroke-width="1.3" fill="none"/><g transform="translate(4,1) scale(.8)"><path d="M8.5 2.5L15 8L14.5 11.5L8 13.5L5.5 11.5L5 9.5Z" fill="#c4c4c4" stroke="#000" stroke-width="1.1"/><path d="M7.5 6L12 11M9.5 4.5L14 9.5M6.5 9L10 12.5" stroke="#8a8a8a" stroke-width=".8"/><path d="M8.5 2.5L10.5 0.3L12.5 0L13.2 1.2L15.2 0.8V8Z" fill="#f00"/><path d="M8.5 2.5L10.5 0.3" stroke="#000" stroke-width="1"/><path d="M5.3 11.3L8 13.5L3.8 14.8Z" fill="#f00"/><path d="M0.2 12.5L3.5 16L4.6 14.4" stroke="#000" stroke-width="1" fill="none"/></g></g><g transform="translate(835,58)"><path d="M0.5 1.5H16M0.5 15.5H16" stroke="#f00" stroke-width="1.4" fill="none"/><path d="M1 8.5H16" stroke="#000" stroke-width="1" fill="none"/><path d="M1 12C2.5 3 5 2 6.5 8.5C8 15 10.5 15 12 8.5C13 4 14.5 3 16 3" stroke="#808080" stroke-width="1.1" fill="none"/></g><g transform="translate(858,58)"><path d="M0.5 1.5H16M0.5 15.5H16" stroke="#f00" stroke-width="1.4" fill="none"/><text x="2.5" y="13.5" fill="#808000" font-size="11.5" font-family="Liberation Sans, Noto Sans CJK SC, sans-serif" font-weight="500">金</text></g><g transform="translate(881,58)"><path d="M0.5 16L16 1M3 13.5H16M0.5 15.5H16M6 10.5H16" stroke="#000" stroke-width="1.2" fill="none"/><text x="1" y="10.5" fill="#f00" font-size="11" font-family="Liberation Sans, Noto Sans CJK SC, sans-serif" font-weight="400">J</text></g><g transform="translate(904,58)"><path d="M0.5 16L16 1M3 13.5H16M0.5 15.5H16M6 10.5H16" stroke="#000" stroke-width="1.2" fill="none"/><text x="0" y="10.5" fill="#f00" font-size="12" font-family="Liberation Sans, Noto Sans CJK SC, sans-serif" font-weight="700">F</text></g><g transform="translate(927,58)"><path d="M0.5 16L16 1M3 13.5H16M0.5 15.5H16M6 10.5H16" stroke="#000" stroke-width="1.2" fill="none"/><text x="-0.5" y="10.5" fill="#808000" font-size="10" font-family="Liberation Sans, Noto Sans CJK SC, sans-serif" font-weight="500">金</text></g><g transform="translate(950,58)"><path d="M0.5 16L16 1M3 13.5H16M0.5 15.5H16M6 10.5H16" stroke="#000" stroke-width="1.2" fill="none"/><text x="-0.5" y="10.5" fill="#f00" font-size="11" font-family="Liberation Sans, Noto Sans CJK SC, sans-serif" font-weight="500">神</text></g><g transform="translate(973,58)"><path d="M0.5 16L16 1M3 13.5H16M0.5 15.5H16M6 10.5H16" stroke="#000" stroke-width="1.2" fill="none"/><text x="-0.5" y="10.5" fill="#f00" font-size="12" font-family="Liberation Sans, Noto Sans CJK SC, sans-serif" font-weight="500">赢</text></g><g transform="translate(996,58)"><path d="M0.5 16L16 1M3 13.5H16M0.5 15.5H16M6 10.5H16" stroke="#000" stroke-width="1.2" fill="none"/><text x="-0.5" y="10.5" fill="#f00" font-size="10.5" font-family="Liberation Sans, Noto Sans CJK SC, sans-serif" font-weight="400">四</text></g></svg>


<svg class="chart" width="1235" height="557" viewBox="0 128 1235 557" shape-rendering="crispEdges">
<rect x="0" y="128" width="1235" height="557" fill="#fff"/>
<g font-family="Liberation Sans, sans-serif" font-size="8.8" fill="#9a9a9a" shape-rendering="auto">
<text x="70.8" y="138.8" textLength="21.7" lengthAdjust="spacingAndGlyphs">05-30</text>
<text x="123.0" y="138.8" textLength="21.7" lengthAdjust="spacingAndGlyphs">07-03</text>
<text x="188.3" y="138.8" textLength="20.0" lengthAdjust="spacingAndGlyphs">08-01</text>
<text x="253.7" y="138.8" textLength="21.7" lengthAdjust="spacingAndGlyphs">08-30</text>
<text x="319.0" y="138.8" textLength="20.0" lengthAdjust="spacingAndGlyphs">10-09</text>
<text x="384.4" y="138.8" textLength="18.3" lengthAdjust="spacingAndGlyphs">11-07</text>
<text x="449.8" y="138.8" textLength="20.0" lengthAdjust="spacingAndGlyphs">12-06</text>
<text x="515.1" y="138.8" textLength="20.0" lengthAdjust="spacingAndGlyphs">01-07</text>
<text x="580.4" y="138.8" textLength="20.0" lengthAdjust="spacingAndGlyphs">02-12</text>
<text x="645.8" y="138.8" textLength="20.0" lengthAdjust="spacingAndGlyphs">03-13</text>
<text x="711.1" y="138.8" textLength="20.0" lengthAdjust="spacingAndGlyphs">04-14</text>
<text x="776.5" y="138.8" textLength="20.0" lengthAdjust="spacingAndGlyphs">05-15</text>
<text x="841.8" y="138.8" textLength="20.0" lengthAdjust="spacingAndGlyphs">06-16</text>
<text x="907.2" y="138.8" textLength="20.0" lengthAdjust="spacingAndGlyphs">07-15</text>
<text x="972.5" y="138.8" textLength="20.0" lengthAdjust="spacingAndGlyphs">08-13</text>
<text x="1037.9" y="138.8" textLength="20.0" lengthAdjust="spacingAndGlyphs">09-12</text>
<text x="1103.2" y="138.8" textLength="20.0" lengthAdjust="spacingAndGlyphs">10-20</text>
<text x="1168.6" y="138.8" textLength="16.6" lengthAdjust="spacingAndGlyphs">11-18</text>
</g>
<rect x="70" y="141" width="1165" height="1" fill="#a8a8a8"/>
<line x1="68" x2="1235" y1="535.5" y2="535.5" stroke="#9c9c9c" stroke-dasharray="3 3"/>
<line x1="68" x2="1235" y1="552.5" y2="552.5" stroke="#9c9c9c" stroke-dasharray="3 3"/>
<line x1="68" x2="1235" y1="569.5" y2="569.5" stroke="#9c9c9c" stroke-dasharray="3 3"/>
<line x1="68" x2="1235" y1="586.5" y2="586.5" stroke="#9c9c9c" stroke-dasharray="3 3"/>
<line x1="68" x2="1235" y1="624.5" y2="624.5" stroke="#9c9c9c" stroke-dasharray="3 3"/>
<line x1="68" x2="1235" y1="639.5" y2="639.5" stroke="#9c9c9c" stroke-dasharray="3 3"/>
<line x1="68" x2="1235" y1="654.5" y2="654.5" stroke="#9c9c9c" stroke-dasharray="3 3"/>
<line x1="68" x2="1235" y1="669.5" y2="669.5" stroke="#9c9c9c" stroke-dasharray="3 3"/>
<rect x="0" y="603" width="1235" height="2" fill="#808080"/>
<rect x="70" y="620" width="1165" height="1" fill="#a8a8a8"/>
<defs><clipPath id="cl"><rect x="70" y="128" width="60" height="420"/></clipPath></defs>
<rect x="118" y="171" width="1042" height="1" fill="#008080"/>
<rect x="118" y="181" width="1034" height="1" fill="#0000ff"/>
<rect x="118" y="264" width="1056" height="1" fill="#ff0000"/>
<rect x="118" y="347" width="1042" height="1" fill="#808080"/>
<rect x="118" y="357" width="1049" height="1" fill="#000080"/>
<rect x="118" y="389" width="1049" height="1" fill="#800080"/>
<rect x="118" y="420" width="1049" height="1" fill="#008080"/>
<rect x="118" y="430" width="1042" height="1" fill="#0000ff"/>
<rect x="118" y="289" width="538" height="1" fill="#ff0000"/>
<rect x="118" y="513" width="1070" height="1" fill="#ff0000"/>
<g font-family="DejaVu Sans, sans-serif" font-size="11" text-rendering="geometricPrecision" shape-rendering="auto">
<text x="1160.5" y="176" fill="#008080" textLength="74" lengthAdjust="spacingAndGlyphs">137.5%(135)</text>
<text x="58.2" y="176" fill="#008080" textLength="60" lengthAdjust="spacingAndGlyphs" clip-path="url(#cl)">2428.0025</text>
<text x="1154.0" y="186" fill="#0000ff" textLength="80.5" lengthAdjust="spacingAndGlyphs">133.33%(120)</text>
<text x="58.2" y="186" fill="#0000ff" textLength="60" lengthAdjust="spacingAndGlyphs" clip-path="url(#cl)">2410.4767</text>
<text x="1174.5" y="269" fill="#ff0000" textLength="60" lengthAdjust="spacingAndGlyphs">100.0%(0)</text>
<text x="58.2" y="269" fill="#ff0000" textLength="60" lengthAdjust="spacingAndGlyphs" clip-path="url(#cl)">2270.2700</text>
<text x="1160.5" y="352" fill="#808080" textLength="74" lengthAdjust="spacingAndGlyphs">66.67%(240)</text>
<text x="58.2" y="352" fill="#808080" textLength="60" lengthAdjust="spacingAndGlyphs" clip-path="url(#cl)">2130.0634</text>
<text x="1167.5" y="362" fill="#000080" textLength="67" lengthAdjust="spacingAndGlyphs">62.5%(225)</text>
<text x="58.2" y="362" fill="#000080" textLength="60" lengthAdjust="spacingAndGlyphs" clip-path="url(#cl)">2112.5375</text>
<text x="1167.5" y="394" fill="#800080" textLength="67" lengthAdjust="spacingAndGlyphs">50.0%(180)</text>
<text x="58.2" y="394" fill="#800080" textLength="60" lengthAdjust="spacingAndGlyphs" clip-path="url(#cl)">2059.9600</text>
<text x="1167.5" y="425" fill="#008080" textLength="67" lengthAdjust="spacingAndGlyphs">37.5%(135)</text>
<text x="58.2" y="425" fill="#008080" textLength="60" lengthAdjust="spacingAndGlyphs" clip-path="url(#cl)">2007.3825</text>
<text x="1160.5" y="435" fill="#0000ff" textLength="74" lengthAdjust="spacingAndGlyphs">33.33%(120)</text>
<text x="58.2" y="435" fill="#0000ff" textLength="60" lengthAdjust="spacingAndGlyphs" clip-path="url(#cl)">1989.8567</text>
<text x="1165" y="190" fill="#0000ff" textLength="58" lengthAdjust="spacingAndGlyphs">2423.6001</text>
<text x="139.5" y="511" fill="#0000ff" textLength="58" lengthAdjust="spacingAndGlyphs">1849.6500</text>
</g>
<rect x="118" y="159" width="1" height="376" fill="#ff0000"/>
<rect x="324" y="159" width="1" height="376" fill="#0000ff"/>
<rect x="387" y="159" width="1" height="376" fill="#008080"/>
<rect x="451" y="159" width="1" height="376" fill="#800080"/>
<rect x="656" y="159" width="1" height="376" fill="#ff0000"/>
<rect x="862" y="159" width="1" height="376" fill="#0000ff"/>
<rect x="925" y="159" width="1" height="376" fill="#008080"/>
<rect x="989" y="159" width="1" height="376" fill="#800080"/>
<rect x="1194" y="159" width="1" height="376" fill="#ff0000"/>
<line x1="118.5" y1="513.5" x2="295.5" y2="264.5" stroke="#ff0000" stroke-width="1" shape-rendering="crispEdges"/>
<line x1="119" y1="513" x2="139" y2="508" stroke="#0000ff" stroke-dasharray="4 2" shape-rendering="auto"/>
<polyline points="1144,173.5 1149,174 1165,180.5" fill="none" stroke="#0000ff" stroke-dasharray="4 2" shape-rendering="auto"/>
<g font-family="Liberation Sans, sans-serif" font-size="11" shape-rendering="auto">
<text x="658" y="168.3" fill="#ff0000" textLength="4.5" lengthAdjust="spacingAndGlyphs">1</text>
<text x="658.5" y="490" fill="#ff0000" textLength="16.5" lengthAdjust="spacingAndGlyphs">173</text>
<rect x="863" y="168" width="30.8" height="12" fill="#fff"/>
<text x="865" y="179.3" fill="#0000c0" textLength="27.8" lengthAdjust="spacingAndGlyphs">1.382</text>
<text x="864.5" y="490" fill="#0000c0" textLength="16.5" lengthAdjust="spacingAndGlyphs">239</text>
<rect x="926" y="168" width="19.6" height="12" fill="#fff"/>
<text x="928" y="179.3" fill="#008080" textLength="16.6" lengthAdjust="spacingAndGlyphs">1.5</text>
<text x="927.5" y="490" fill="#008080" textLength="16.5" lengthAdjust="spacingAndGlyphs">260</text>
<rect x="990" y="168" width="30.8" height="12" fill="#fff"/>
<text x="992" y="179.3" fill="#800080" textLength="27.8" lengthAdjust="spacingAndGlyphs">1.618</text>
<text x="991.5" y="490" fill="#800080" textLength="16.5" lengthAdjust="spacingAndGlyphs">280</text>
<text x="1196.5" y="490" fill="#ff0000" textLength="16.5" lengthAdjust="spacingAndGlyphs">346</text>
</g>
<text x="1196" y="178.6" fill="#ff0000" font-family="DejaVu Sans, sans-serif" font-size="10.5" shape-rendering="auto">2</text>
<text x="264" y="262" fill="#ff0000" font-family="DejaVu Sans, Noto Sans CJK SC, sans-serif" font-size="10.5" textLength="134" lengthAdjust="spacingAndGlyphs" shape-rendering="auto"><tspan font-size="12">上涨</tspan>420.6200<tspan font-size="12">点</tspan>22.74%</text>
<path d="M74 232h1v14h-1zM73 235h2v11h-2zM77 239h1v10h-1zM76 240h2v9h-2zM80 248h1v16h-1zM79 248h2v14h-2zM83 261h1v8h-1zM82 261h2v8h-2zM87 268h1v13h-1zM86 268h2v13h-2zM90 277h1v25h-1zM89 279h2v16h-2zM93 312h1v33h-1zM92 312h2v32h-2zM99 325h1v12h-1zM98 327h2v9h-2zM105 335h1v26h-1zM104 343h2v17h-2zM108 340h1v34h-1zM107 340h2v34h-2zM115 383h1v65h-1zM114 385h2v51h-2zM121 449h1v21h-1zM120 452h2v18h-2zM124 437h1v21h-1zM123 437h2v21h-2zM136 426h1v19h-1zM135 431h2v10h-2zM146 434h1v17h-1zM145 438h2v12h-2zM158 381h1v22h-1zM157 381h2v17h-2zM167 380h1v19h-1zM166 384h2v12h-2zM171 399h1v15h-1zM170 401h2v12h-2zM174 404h1v25h-1zM173 412h2v8h-2zM183 400h1v18h-1zM182 403h2v8h-2zM186 398h1v16h-1zM185 403h2v10h-2zM189 412h1v12h-1zM188 413h2v9h-2zM192 425h1v12h-1zM191 425h2v11h-2zM199 416h1v15h-1zM198 416h2v11h-2zM205 398h1v11h-1zM204 399h2v7h-2zM214 385h1v13h-1zM213 389h2v5h-2zM217 389h1v12h-1zM216 389h2v11h-2zM220 389h1v17h-1zM219 390h2v11h-2zM230 352h1v16h-1zM229 352h2v14h-2zM233 360h1v17h-1zM232 363h2v14h-2zM236 307h1v81h-1zM235 307h2v72h-2zM242 367h1v15h-1zM241 372h2v7h-2zM245 379h1v11h-1zM244 380h2v8h-2zM248 376h1v12h-1zM247 378h2v10h-2zM251 378h1v29h-1zM250 388h2v11h-2zM264 359h1v13h-1zM263 359h2v13h-2zM270 361h1v17h-1zM269 362h2v16h-2zM279 349h1v7h-1zM278 349h2v5h-2zM292 272h1v14h-1zM291 276h2v5h-2zM298 272h1v12h-1zM297 272h2v12h-2zM301 278h1v11h-1zM300 278h2v11h-2zM304 288h1v27h-1zM303 296h2v19h-2zM314 294h1v19h-1zM313 297h2v16h-2zM317 296h1v13h-1zM316 298h2v6h-2zM320 310h1v22h-1zM319 317h2v10h-2zM335 297h1v17h-1zM334 302h2v6h-2zM345 283h1v10h-1zM344 283h2v9h-2zM348 289h1v27h-1zM347 291h2v25h-2zM351 300h1v16h-1zM350 300h2v16h-2zM354 303h1v12h-1zM353 303h2v10h-2zM360 290h1v13h-1zM359 294h2v4h-2zM363 291h1v28h-1zM362 301h2v16h-2zM366 317h1v11h-1zM365 317h2v11h-2zM370 324h1v27h-1zM369 324h2v26h-2zM373 342h1v9h-1zM372 343h2v5h-2zM376 328h1v41h-1zM375 341h2v23h-2zM382 332h1v10h-1zM381 332h2v8h-2zM388 330h1v9h-1zM387 332h2v6h-2zM394 327h1v15h-1zM393 328h2v10h-2zM398 341h1v13h-1zM397 346h2v7h-2zM401 349h1v14h-1zM400 350h2v8h-2zM410 353h1v20h-1zM409 360h2v7h-2zM422 305h1v9h-1zM421 305h2v9h-2zM432 300h1v12h-1zM431 301h2v7h-2zM435 300h1v16h-1zM434 305h2v11h-2zM438 311h1v9h-1zM437 311h2v9h-2zM447 292h1v6h-1zM446 292h2v4h-2zM460 274h1v9h-1zM459 275h2v7h-2zM463 278h1v11h-1zM462 279h2v10h-2zM466 278h1v9h-1zM465 279h2v8h-2zM469 277h1v10h-1zM468 277h2v7h-2zM472 289h1v21h-1zM471 289h2v19h-2zM482 306h1v23h-1zM481 309h2v14h-2zM485 327h1v10h-1zM484 327h2v9h-2zM488 333h1v7h-1zM487 333h2v7h-2zM491 331h1v18h-1zM490 336h2v11h-2zM494 347h1v28h-1zM493 351h2v17h-2zM500 359h1v18h-1zM499 362h2v13h-2zM506 363h1v19h-1zM505 365h2v14h-2zM513 359h1v9h-1zM512 361h2v4h-2zM519 358h1v6h-1zM518 359h2v3h-2zM522 364h1v14h-1zM521 368h2v10h-2zM525 378h1v25h-1zM524 378h2v22h-2zM531 388h1v13h-1zM530 388h2v11h-2zM534 391h1v17h-1zM533 395h2v7h-2zM538 408h1v10h-1zM537 408h2v8h-2zM541 409h1v15h-1zM540 412h2v12h-2zM547 409h1v9h-1zM546 409h2v6h-2zM553 414h1v9h-1zM552 417h2v4h-2zM556 422h1v11h-1zM555 422h2v10h-2zM566 394h1v6h-1zM565 395h2v5h-2zM572 398h1v9h-1zM571 398h2v9h-2zM575 396h1v12h-1zM574 398h2v9h-2zM581 397h1v8h-1zM580 399h2v3h-2zM597 352h1v15h-1zM596 356h2v11h-2zM606 345h1v12h-1zM605 345h2v12h-2zM612 320h1v23h-1zM611 320h2v15h-2zM615 346h1v20h-1zM614 350h2v10h-2zM618 365h1v24h-1zM617 365h2v17h-2zM621 373h1v35h-1zM620 373h2v24h-2zM637 380h1v14h-1zM636 380h2v14h-2zM640 381h1v12h-1zM639 381h2v12h-2zM646 378h1v16h-1zM645 382h2v11h-2zM649 399h1v27h-1zM648 403h2v23h-2zM662 414h1v15h-1zM661 414h2v13h-2zM668 404h1v8h-1zM667 406h2v6h-2zM674 407h1v21h-1zM673 409h2v16h-2zM687 381h1v8h-1zM686 381h2v8h-2zM690 381h1v17h-1zM689 381h2v17h-2zM693 390h1v13h-1zM692 390h2v10h-2zM696 397h1v13h-1zM695 397h2v13h-2zM705 386h1v16h-1zM704 387h2v15h-2zM727 350h1v16h-1zM726 350h2v15h-2zM733 360h1v7h-1zM732 360h2v6h-2zM740 364h1v21h-1zM739 364h2v19h-2zM746 380h1v9h-1zM745 380h2v9h-2zM749 380h1v11h-1zM748 382h2v8h-2zM752 386h1v17h-1zM751 390h2v10h-2zM755 404h1v20h-1zM754 409h2v9h-2zM771 410h1v9h-1zM770 413h2v5h-2zM777 413h1v10h-1zM776 413h2v9h-2zM783 389h1v8h-1zM782 391h2v4h-2zM786 392h1v7h-1zM785 393h2v4h-2zM789 397h1v14h-1zM788 400h2v8h-2zM796 410h1v16h-1zM795 410h2v15h-2zM799 414h1v8h-1zM798 414h2v6h-2zM805 400h1v12h-1zM804 402h2v8h-2zM811 398h1v4h-1zM810 398h2v4h-2zM814 399h1v6h-1zM813 399h2v6h-2zM821 391h1v9h-1zM820 393h2v7h-2zM824 397h1v9h-1zM823 397h2v9h-2zM827 396h1v6h-1zM826 397h2v5h-2zM830 402h1v14h-1zM829 405h2v6h-2zM836 400h1v11h-1zM835 401h2v8h-2zM858 376h1v10h-1zM857 378h2v6h-2zM861 385h1v8h-1zM860 386h2v7h-2zM864 390h1v24h-1zM863 393h2v18h-2zM870 405h1v5h-1zM869 405h2v5h-2zM877 406h1v7h-1zM876 406h2v7h-2zM898 387h1v5h-1zM897 387h2v5h-2zM908 388h1v14h-1zM907 389h2v13h-2zM923 380h1v8h-1zM922 380h2v6h-2zM926 387h1v10h-1zM925 390h2v7h-2zM933 389h1v6h-1zM932 391h2v4h-2zM961 296h1v16h-1zM960 297h2v9h-2zM967 291h1v7h-1zM966 292h2v4h-2zM973 295h1v19h-1zM972 299h2v15h-2zM982 292h1v7h-1zM981 292h2v7h-2zM985 288h1v16h-1zM984 293h2v11h-2zM988 288h1v15h-1zM987 290h2v12h-2zM1001 278h1v8h-1zM1000 279h2v7h-2zM1004 282h1v17h-1zM1003 282h2v17h-2zM1010 281h1v12h-1zM1009 282h2v11h-2zM1013 287h1v18h-1zM1012 293h2v5h-2zM1016 295h1v8h-1zM1015 296h2v7h-2zM1020 295h1v14h-1zM1019 295h2v14h-2zM1041 229h1v8h-1zM1040 229h2v8h-2zM1044 235h1v8h-1zM1043 238h2v5h-2zM1048 222h1v22h-1zM1047 225h2v15h-2zM1051 228h1v17h-1zM1050 233h2v12h-2zM1057 219h1v31h-1zM1056 222h2v25h-2zM1069 233h1v23h-1zM1068 241h2v12h-2zM1072 240h1v13h-1zM1071 242h2v11h-2zM1079 209h1v16h-1zM1078 214h2v6h-2zM1097 195h1v13h-1zM1096 196h2v10h-2zM1100 207h1v15h-1zM1099 207h2v11h-2zM1104 200h1v17h-1zM1103 200h2v11h-2zM1110 194h1v21h-1zM1109 194h2v20h-2zM1113 214h1v25h-1zM1112 219h2v14h-2zM1119 211h1v13h-1zM1118 213h2v9h-2zM1122 217h1v15h-1zM1121 218h2v14h-2zM1125 230h1v18h-1zM1124 233h2v15h-2zM1128 238h1v10h-1zM1127 238h2v9h-2zM1132 250h1v8h-1zM1131 253h2v4h-2z" fill="#008000"/>
<path d="M71 231h1v8h-1zM70 231h2v8h-2zM96 327h1v12h-1zM95 329h2v6h-2zM102 328h1v14h-1zM101 333h2v9h-2zM111 373h1v26h-1zM110 374h2v17h-2zM118 448h1v7h-1zM117 449h2v6h-2zM127 436h1v32h-1zM126 443h2v22h-2zM130 427h1v22h-1zM129 428h2v17h-2zM133 420h1v16h-1zM132 422h2v13h-2zM139 411h1v27h-1zM138 412h2v22h-2zM143 411h1v12h-1zM142 412h2v7h-2zM149 442h1v14h-1zM148 447h2v9h-2zM152 419h1v29h-1zM151 422h2v18h-2zM155 369h1v49h-1zM154 370h2v41h-2zM161 379h1v23h-1zM160 385h2v13h-2zM164 385h1v15h-1zM163 390h2v9h-2zM177 421h1v20h-1zM176 423h2v14h-2zM180 394h1v27h-1zM179 394h2v21h-2zM195 420h1v25h-1zM194 420h2v25h-2zM202 407h1v19h-1zM201 407h2v19h-2zM208 394h1v15h-1zM207 394h2v14h-2zM211 385h1v18h-1zM210 388h2v9h-2zM223 364h1v27h-1zM222 374h2v17h-2zM227 359h1v10h-1zM226 359h2v10h-2zM239 370h1v23h-1zM238 372h2v17h-2zM254 366h1v25h-1zM253 374h2v10h-2zM258 362h1v9h-1zM257 362h2v9h-2zM261 357h1v19h-1zM260 357h2v15h-2zM267 356h1v15h-1zM266 356h2v15h-2zM273 351h1v17h-1zM272 351h2v17h-2zM276 345h1v10h-1zM275 345h2v10h-2zM282 338h1v16h-1zM281 341h2v13h-2zM286 295h1v40h-1zM285 297h2v35h-2zM289 283h1v21h-1zM288 284h2v20h-2zM295 265h1v24h-1zM294 268h2v18h-2zM307 308h1v14h-1zM306 308h2v9h-2zM310 292h1v15h-1zM309 294h2v13h-2zM323 326h1v10h-1zM322 326h2v10h-2zM326 320h1v6h-1zM325 320h2v5h-2zM329 306h1v23h-1zM328 309h2v14h-2zM332 298h1v16h-1zM331 299h2v15h-2zM338 289h1v16h-1zM337 294h2v7h-2zM342 280h1v9h-1zM341 282h2v5h-2zM357 288h1v23h-1zM356 297h2v12h-2zM379 328h1v24h-1zM378 333h2v12h-2zM385 331h1v15h-1zM384 336h2v6h-2zM391 330h1v20h-1zM390 330h2v15h-2zM404 353h1v16h-1zM403 357h2v12h-2zM407 348h1v12h-1zM406 348h2v12h-2zM413 363h1v14h-1zM412 363h2v10h-2zM416 333h1v31h-1zM415 345h2v13h-2zM419 307h1v32h-1zM418 309h2v25h-2zM426 302h1v12h-1zM425 306h2v6h-2zM429 302h1v17h-1zM428 304h2v9h-2zM441 301h1v18h-1zM440 301h2v15h-2zM444 285h1v19h-1zM443 286h2v16h-2zM450 287h1v35h-1zM449 290h2v28h-2zM454 291h1v19h-1zM453 294h2v10h-2zM457 270h1v26h-1zM456 272h2v15h-2zM475 297h1v12h-1zM474 300h2v7h-2zM478 303h1v12h-1zM477 303h2v11h-2zM497 365h1v19h-1zM496 371h2v11h-2zM503 361h1v11h-1zM502 362h2v8h-2zM510 364h1v19h-1zM509 366h2v10h-2zM516 353h1v18h-1zM515 359h2v12h-2zM528 393h1v14h-1zM527 393h2v14h-2zM544 408h1v15h-1zM543 413h2v5h-2zM550 404h1v12h-1zM549 405h2v10h-2zM559 416h1v13h-1zM558 418h2v10h-2zM562 393h1v26h-1zM561 393h2v25h-2zM569 388h1v15h-1zM568 390h2v12h-2zM578 394h1v7h-1zM577 394h2v5h-2zM584 398h1v17h-1zM583 398h2v17h-2zM587 372h1v23h-1zM586 372h2v17h-2zM590 358h1v17h-1zM589 359h2v16h-2zM594 358h1v9h-1zM593 359h2v5h-2zM600 355h1v13h-1zM599 355h2v9h-2zM603 343h1v11h-1zM602 344h2v8h-2zM609 334h1v24h-1zM608 339h2v17h-2zM625 399h1v17h-1zM624 401h2v14h-2zM628 384h1v19h-1zM627 387h2v9h-2zM631 390h1v22h-1zM630 391h2v21h-2zM634 378h1v18h-1zM633 380h2v16h-2zM643 385h1v21h-1zM642 386h2v19h-2zM653 419h1v14h-1zM652 420h2v13h-2zM656 425h1v5h-1zM655 425h2v5h-2zM659 407h1v19h-1zM658 412h2v11h-2zM665 409h1v16h-1zM664 415h2v10h-2zM671 411h1v12h-1zM670 412h2v8h-2zM677 393h1v39h-1zM676 402h2v15h-2zM681 380h1v17h-1zM680 381h2v11h-2zM684 377h1v13h-1zM683 380h2v8h-2zM699 394h1v13h-1zM698 394h2v9h-2zM702 388h1v8h-1zM701 390h2v5h-2zM709 389h1v14h-1zM708 389h2v13h-2zM712 363h1v30h-1zM711 363h2v27h-2zM715 361h1v6h-1zM714 361h2v4h-2zM718 337h1v29h-1zM717 348h2v14h-2zM721 342h1v11h-1zM720 342h2v7h-2zM724 345h1v10h-1zM723 345h2v10h-2zM730 358h1v12h-1zM729 359h2v10h-2zM737 365h1v11h-1zM736 365h2v11h-2zM743 380h1v16h-1zM742 380h2v16h-2zM758 411h1v14h-1zM757 412h2v12h-2zM761 407h1v7h-1zM760 409h2v5h-2zM765 407h1v13h-1zM764 410h2v8h-2zM768 401h1v10h-1zM767 401h2v7h-2zM774 402h1v19h-1zM773 407h2v9h-2zM780 391h1v23h-1zM779 394h2v13h-2zM793 408h1v9h-1zM792 408h2v9h-2zM802 409h1v20h-1zM801 412h2v13h-2zM808 404h1v10h-1zM807 405h2v9h-2zM817 393h1v14h-1zM816 396h2v11h-2zM833 399h1v16h-1zM832 401h2v13h-2zM839 397h1v13h-1zM838 400h2v8h-2zM842 393h1v15h-1zM841 396h2v12h-2zM845 391h1v5h-1zM844 391h2v5h-2zM849 391h1v6h-1zM848 392h2v5h-2zM852 381h1v14h-1zM851 383h2v12h-2zM855 372h1v11h-1zM854 372h2v11h-2zM867 408h1v10h-1zM866 409h2v9h-2zM873 404h1v7h-1zM872 406h2v3h-2zM880 400h1v9h-1zM879 402h2v4h-2zM883 398h1v11h-1zM882 399h2v10h-2zM886 393h1v8h-1zM885 393h2v5h-2zM889 394h1v5h-1zM888 394h2v5h-2zM892 388h1v10h-1zM891 388h2v9h-2zM895 385h1v10h-1zM894 388h2v7h-2zM901 386h1v8h-1zM900 388h2v5h-2zM905 386h1v10h-1zM904 386h2v7h-2zM911 397h1v7h-1zM910 397h2v6h-2zM914 393h1v12h-1zM913 394h2v11h-2zM917 384h1v14h-1zM916 384h2v13h-2zM920 382h1v7h-1zM919 382h2v5h-2zM929 384h1v13h-1zM928 388h2v6h-2zM936 378h1v17h-1zM935 379h2v15h-2zM939 373h1v8h-1zM938 376h2v4h-2zM942 361h1v16h-1zM941 362h2v14h-2zM945 349h1v12h-1zM944 349h2v12h-2zM948 317h1v27h-1zM947 317h2v19h-2zM951 310h1v12h-1zM950 310h2v8h-2zM954 308h1v11h-1zM953 308h2v11h-2zM957 304h1v17h-1zM956 306h2v15h-2zM964 292h1v20h-1zM963 298h2v8h-2zM970 293h1v11h-1zM969 297h2v6h-2zM976 306h1v11h-1zM975 308h2v8h-2zM979 290h1v17h-1zM978 294h2v10h-2zM992 287h1v16h-1zM991 288h2v11h-2zM995 281h1v8h-1zM994 284h2v5h-2zM998 278h1v11h-1zM997 280h2v9h-2zM1007 280h1v11h-1zM1006 280h2v8h-2zM1023 295h1v15h-1zM1022 296h2v14h-2zM1026 284h1v11h-1zM1025 284h2v11h-2zM1029 266h1v19h-1zM1028 269h2v10h-2zM1032 252h1v13h-1zM1031 255h2v9h-2zM1035 242h1v14h-1zM1034 243h2v11h-2zM1038 230h1v12h-1zM1037 231h2v11h-2zM1054 223h1v10h-1zM1053 223h2v10h-2zM1060 241h1v16h-1zM1059 247h2v5h-2zM1063 235h1v13h-1zM1062 239h2v9h-2zM1066 228h1v16h-1zM1065 228h2v12h-2zM1076 219h1v29h-1zM1075 221h2v17h-2zM1082 217h1v12h-1zM1081 221h2v8h-2zM1085 210h1v9h-1zM1084 210h2v9h-2zM1088 208h1v6h-1zM1087 208h2v5h-2zM1091 198h1v16h-1zM1090 204h2v6h-2zM1094 192h1v15h-1zM1093 195h2v8h-2zM1107 202h1v18h-1zM1106 205h2v14h-2zM1116 212h1v11h-1zM1115 212h2v11h-2zM1135 224h1v26h-1zM1134 233h2v14h-2zM1138 198h1v25h-1zM1137 199h2v23h-2zM1141 188h1v19h-1zM1140 195h2v8h-2zM1144 173h1v24h-1zM1143 174h2v23h-2z" fill="#ff0000"/>
<path d="M73 580h2v23h-2zM76 583h2v20h-2zM79 582h2v21h-2zM86 587h2v16h-2zM89 584h2v19h-2zM92 583h2v20h-2zM98 587h2v16h-2zM104 587h2v16h-2zM107 587h2v16h-2zM114 580h2v23h-2zM120 582h2v21h-2zM123 581h2v22h-2zM135 583h2v20h-2zM138 582h2v21h-2zM145 585h2v18h-2zM157 578h2v25h-2zM166 581h2v22h-2zM170 584h2v19h-2zM173 581h2v22h-2zM179 582h2v21h-2zM182 581h2v22h-2zM185 582h2v21h-2zM188 588h2v15h-2zM191 594h2v9h-2zM198 588h2v15h-2zM204 583h2v20h-2zM213 581h2v22h-2zM219 583h2v20h-2zM229 579h2v24h-2zM232 582h2v21h-2zM235 571h2v32h-2zM241 581h2v22h-2zM244 585h2v18h-2zM247 584h2v19h-2zM250 580h2v23h-2zM263 575h2v28h-2zM269 572h2v31h-2zM278 577h2v26h-2zM291 552h2v51h-2zM297 567h2v36h-2zM300 571h2v32h-2zM303 571h2v32h-2zM313 570h2v33h-2zM316 570h2v33h-2zM319 574h2v29h-2zM334 572h2v31h-2zM344 571h2v32h-2zM347 571h2v32h-2zM350 577h2v26h-2zM359 572h2v31h-2zM362 572h2v31h-2zM365 581h2v22h-2zM369 579h2v24h-2zM372 585h2v18h-2zM375 573h2v30h-2zM381 580h2v23h-2zM387 587h2v16h-2zM393 582h2v21h-2zM397 586h2v17h-2zM400 586h2v17h-2zM409 585h2v18h-2zM421 577h2v26h-2zM431 579h2v24h-2zM434 580h2v23h-2zM437 582h2v21h-2zM446 581h2v22h-2zM459 578h2v25h-2zM462 581h2v22h-2zM465 584h2v19h-2zM468 580h2v23h-2zM471 580h2v23h-2zM481 582h2v21h-2zM484 587h2v16h-2zM487 590h2v13h-2zM490 588h2v15h-2zM493 585h2v18h-2zM499 588h2v15h-2zM505 587h2v16h-2zM512 588h2v15h-2zM518 589h2v14h-2zM521 585h2v18h-2zM524 584h2v19h-2zM530 588h2v15h-2zM533 587h2v16h-2zM537 587h2v16h-2zM540 589h2v14h-2zM546 589h2v14h-2zM552 589h2v14h-2zM555 591h2v12h-2zM565 585h2v18h-2zM571 584h2v19h-2zM580 590h2v13h-2zM596 572h2v31h-2zM605 573h2v30h-2zM611 570h2v33h-2zM614 578h2v25h-2zM617 577h2v26h-2zM620 574h2v29h-2zM639 581h2v22h-2zM645 581h2v22h-2zM648 579h2v24h-2zM661 585h2v18h-2zM667 583h2v20h-2zM673 580h2v23h-2zM686 582h2v21h-2zM689 578h2v25h-2zM692 578h2v25h-2zM695 583h2v20h-2zM704 580h2v23h-2zM726 581h2v22h-2zM732 584h2v19h-2zM739 583h2v20h-2zM745 587h2v16h-2zM748 586h2v17h-2zM751 584h2v19h-2zM754 584h2v19h-2zM770 587h2v16h-2zM776 587h2v16h-2zM782 583h2v20h-2zM785 588h2v15h-2zM788 587h2v16h-2zM795 589h2v14h-2zM798 590h2v13h-2zM804 587h2v16h-2zM810 588h2v15h-2zM813 589h2v14h-2zM820 586h2v17h-2zM823 587h2v16h-2zM826 588h2v15h-2zM829 588h2v15h-2zM832 589h2v14h-2zM857 585h2v18h-2zM860 585h2v18h-2zM863 584h2v19h-2zM869 588h2v15h-2zM876 589h2v14h-2zM888 582h2v21h-2zM897 581h2v22h-2zM907 579h2v24h-2zM922 574h2v29h-2zM925 581h2v22h-2zM932 583h2v20h-2zM960 563h2v40h-2zM966 566h2v37h-2zM972 566h2v37h-2zM981 571h2v32h-2zM984 566h2v37h-2zM987 567h2v36h-2zM1000 568h2v35h-2zM1003 568h2v35h-2zM1009 569h2v34h-2zM1012 569h2v34h-2zM1019 577h2v26h-2zM1040 562h2v41h-2zM1043 563h2v40h-2zM1047 557h2v46h-2zM1056 540h2v63h-2zM1068 566h2v37h-2zM1078 556h2v47h-2zM1096 556h2v47h-2zM1099 561h2v42h-2zM1103 562h2v41h-2zM1109 551h2v52h-2zM1112 559h2v44h-2zM1118 568h2v35h-2zM1121 571h2v32h-2zM1124 569h2v34h-2zM1127 575h2v28h-2zM1131 576h2v27h-2z" fill="#008000"/>
<path d="M70 580h2v23h-2zM82 586h2v17h-2zM95 587h2v16h-2zM101 588h2v15h-2zM110 586h2v17h-2zM117 574h2v29h-2zM126 582h2v21h-2zM129 587h2v16h-2zM132 585h2v18h-2zM142 584h2v19h-2zM148 590h2v13h-2zM151 584h2v19h-2zM154 570h2v33h-2zM160 582h2v21h-2zM163 583h2v20h-2zM176 585h2v18h-2zM194 587h2v16h-2zM201 584h2v19h-2zM207 584h2v19h-2zM210 581h2v22h-2zM216 585h2v18h-2zM222 575h2v28h-2zM226 578h2v25h-2zM238 583h2v20h-2zM253 578h2v25h-2zM257 577h2v26h-2zM260 569h2v34h-2zM266 567h2v36h-2zM272 574h2v29h-2zM275 573h2v30h-2zM281 573h2v30h-2zM285 557h2v46h-2zM288 553h2v50h-2zM294 559h2v44h-2zM306 579h2v24h-2zM309 575h2v28h-2zM322 581h2v22h-2zM325 584h2v19h-2zM328 577h2v26h-2zM331 576h2v27h-2zM337 570h2v33h-2zM341 568h2v35h-2zM353 581h2v22h-2zM356 574h2v29h-2zM378 578h2v25h-2zM384 584h2v19h-2zM390 584h2v19h-2zM403 588h2v15h-2zM406 586h2v17h-2zM412 586h2v17h-2zM415 577h2v26h-2zM418 570h2v33h-2zM425 578h2v25h-2zM428 574h2v29h-2zM440 579h2v24h-2zM443 575h2v28h-2zM449 567h2v36h-2zM453 579h2v24h-2zM456 570h2v33h-2zM474 585h2v18h-2zM477 585h2v18h-2zM496 589h2v14h-2zM502 589h2v14h-2zM509 587h2v16h-2zM515 586h2v17h-2zM527 590h2v13h-2zM543 588h2v15h-2zM549 588h2v15h-2zM558 591h2v12h-2zM561 582h2v21h-2zM568 584h2v19h-2zM574 588h2v15h-2zM577 588h2v15h-2zM583 588h2v15h-2zM586 577h2v26h-2zM589 573h2v30h-2zM593 577h2v26h-2zM599 580h2v23h-2zM602 574h2v29h-2zM608 571h2v32h-2zM624 580h2v23h-2zM627 575h2v28h-2zM630 580h2v23h-2zM633 576h2v27h-2zM636 579h2v24h-2zM642 580h2v23h-2zM652 584h2v19h-2zM655 582h2v21h-2zM658 582h2v21h-2zM664 585h2v18h-2zM670 583h2v20h-2zM676 573h2v30h-2zM680 572h2v31h-2zM683 575h2v28h-2zM698 586h2v17h-2zM701 582h2v21h-2zM708 586h2v17h-2zM711 575h2v28h-2zM714 581h2v22h-2zM717 570h2v33h-2zM720 575h2v28h-2zM723 582h2v21h-2zM729 584h2v19h-2zM736 585h2v18h-2zM742 582h2v21h-2zM757 587h2v16h-2zM760 587h2v16h-2zM764 586h2v17h-2zM767 587h2v16h-2zM773 587h2v16h-2zM779 579h2v24h-2zM792 589h2v14h-2zM801 590h2v13h-2zM807 590h2v13h-2zM816 586h2v17h-2zM835 589h2v14h-2zM838 589h2v14h-2zM841 586h2v17h-2zM844 587h2v16h-2zM848 586h2v17h-2zM851 583h2v20h-2zM854 583h2v20h-2zM866 589h2v14h-2zM872 588h2v15h-2zM879 586h2v17h-2zM882 583h2v20h-2zM885 583h2v20h-2zM891 580h2v23h-2zM894 577h2v26h-2zM900 583h2v20h-2zM904 583h2v20h-2zM910 583h2v20h-2zM913 581h2v22h-2zM916 579h2v24h-2zM919 577h2v26h-2zM928 581h2v22h-2zM935 577h2v26h-2zM938 574h2v29h-2zM941 568h2v35h-2zM944 573h2v30h-2zM947 554h2v49h-2zM950 561h2v42h-2zM953 564h2v39h-2zM956 569h2v34h-2zM963 567h2v36h-2zM969 566h2v37h-2zM975 575h2v28h-2zM978 572h2v31h-2zM991 572h2v31h-2zM994 569h2v34h-2zM997 566h2v37h-2zM1006 570h2v33h-2zM1015 578h2v25h-2zM1022 581h2v22h-2zM1025 576h2v27h-2zM1028 563h2v40h-2zM1031 559h2v44h-2zM1034 561h2v42h-2zM1037 559h2v44h-2zM1050 563h2v40h-2zM1053 558h2v45h-2zM1059 559h2v44h-2zM1062 564h2v39h-2zM1065 567h2v36h-2zM1071 570h2v33h-2zM1075 557h2v46h-2zM1081 567h2v36h-2zM1084 561h2v42h-2zM1087 563h2v40h-2zM1090 560h2v43h-2zM1093 554h2v49h-2zM1106 561h2v42h-2zM1115 570h2v33h-2zM1134 566h2v37h-2zM1137 548h2v55h-2zM1140 541h2v62h-2zM1143 535h2v68h-2z" fill="#ff0000"/>
<path d="M83 644h1v3h-1zM87 644h1v6h-1zM90 644h1v10h-1zM93 644h1v14h-1zM96 644h1v18h-1zM99 644h1v19h-1zM102 644h1v19h-1zM105 644h1v20h-1zM108 644h1v20h-1zM111 644h1v21h-1zM115 644h1v27h-1zM118 644h1v30h-1zM121 644h1v32h-1zM124 644h1v29h-1zM127 644h1v25h-1zM130 644h1v20h-1zM133 644h1v15h-1zM136 644h1v10h-1zM139 644h1v3h-1zM317 644h1v3h-1zM320 644h1v6h-1zM323 644h1v9h-1zM326 644h1v9h-1zM329 644h1v8h-1zM332 644h1v7h-1zM335 644h1v6h-1zM338 644h1v3h-1zM342 644h1v2h-1zM348 644h1v3h-1zM351 644h1v5h-1zM354 644h1v5h-1zM357 644h1v4h-1zM360 644h1v5h-1zM363 644h1v6h-1zM366 644h1v9h-1zM370 644h1v11h-1zM373 644h1v13h-1zM376 644h1v13h-1zM379 644h1v11h-1zM382 644h1v10h-1zM385 644h1v8h-1zM388 644h1v8h-1zM391 644h1v6h-1zM394 644h1v6h-1zM398 644h1v5h-1zM401 644h1v6h-1zM404 644h1v8h-1zM407 644h1v6h-1zM410 644h1v6h-1zM413 644h1v6h-1zM416 644h1v4h-1zM478 644h1v3h-1zM482 644h1v6h-1zM485 644h1v9h-1zM488 644h1v11h-1zM491 644h1v14h-1zM494 644h1v16h-1zM497 644h1v17h-1zM500 644h1v16h-1zM503 644h1v15h-1zM506 644h1v14h-1zM510 644h1v13h-1zM513 644h1v10h-1zM516 644h1v8h-1zM519 644h1v5h-1zM522 644h1v5h-1zM525 644h1v6h-1zM528 644h1v7h-1zM531 644h1v6h-1zM534 644h1v8h-1zM538 644h1v8h-1zM541 644h1v8h-1zM544 644h1v7h-1zM547 644h1v5h-1zM550 644h1v4h-1zM553 644h1v3h-1zM556 644h1v3h-1zM559 644h1v3h-1zM625 644h1v4h-1zM628 644h1v6h-1zM631 644h1v6h-1zM634 644h1v6h-1zM637 644h1v5h-1zM640 644h1v5h-1zM643 644h1v5h-1zM646 644h1v4h-1zM649 644h1v5h-1zM653 644h1v8h-1zM656 644h1v8h-1zM659 644h1v8h-1zM662 644h1v6h-1zM665 644h1v5h-1zM668 644h1v3h-1zM671 644h1v3h-1zM674 644h1v3h-1zM743 644h1v3h-1zM746 644h1v5h-1zM749 644h1v6h-1zM752 644h1v8h-1zM755 644h1v10h-1zM758 644h1v11h-1zM761 644h1v10h-1zM765 644h1v10h-1zM768 644h1v9h-1zM771 644h1v8h-1zM774 644h1v8h-1zM777 644h1v6h-1zM780 644h1v5h-1zM799 644h1v2h-1zM802 644h1v2h-1zM805 644h1v2h-1zM870 644h1v2h-1zM873 644h1v3h-1zM877 644h1v3h-1zM880 644h1v3h-1zM883 644h1v2h-1zM1004 644h1v2h-1zM1007 644h1v3h-1zM1010 644h1v5h-1zM1013 644h1v6h-1zM1016 644h1v8h-1zM1020 644h1v10h-1zM1023 644h1v8h-1zM1026 644h1v6h-1zM1029 644h1v4h-1zM1063 644h1v2h-1zM1069 644h1v5h-1zM1072 644h1v5h-1zM1076 644h1v4h-1zM1079 644h1v3h-1zM1082 644h1v2h-1zM1107 644h1v2h-1zM1110 644h1v3h-1zM1113 644h1v5h-1zM1116 644h1v6h-1zM1119 644h1v7h-1zM1122 644h1v8h-1zM1125 644h1v11h-1zM1128 644h1v13h-1zM1132 644h1v14h-1zM1135 644h1v10h-1zM1138 644h1v5h-1zM1181 644h1v2h-1zM1184 644h1v2h-1zM1188 644h1v3h-1zM1191 644h1v3h-1zM1194 644h1v3h-1zM1197 644h1v4h-1zM1200 644h1v4h-1zM1203 644h1v4h-1zM1206 644h1v4h-1zM1209 644h1v4h-1zM1212 644h1v4h-1zM1216 644h1v4h-1zM1219 644h1v4h-1zM1222 644h1v4h-1zM1225 644h1v4h-1zM1228 644h1v4h-1zM1231 644h1v4h-1z" fill="#008000"/>
<path d="M71 637h1v8h-1zM74 641h1v4h-1zM77 642h1v3h-1zM152 641h1v4h-1zM155 633h1v12h-1zM158 631h1v14h-1zM161 628h1v17h-1zM164 627h1v18h-1zM167 628h1v17h-1zM171 632h1v13h-1zM174 636h1v9h-1zM177 634h1v11h-1zM180 635h1v10h-1zM183 634h1v11h-1zM186 636h1v9h-1zM189 638h1v7h-1zM192 640h1v5h-1zM195 642h1v3h-1zM199 643h1v2h-1zM202 641h1v4h-1zM205 639h1v6h-1zM208 637h1v8h-1zM211 635h1v10h-1zM214 636h1v9h-1zM217 635h1v10h-1zM220 637h1v8h-1zM223 633h1v12h-1zM227 633h1v12h-1zM230 632h1v13h-1zM233 634h1v11h-1zM236 636h1v9h-1zM239 637h1v8h-1zM242 638h1v7h-1zM245 640h1v5h-1zM248 642h1v3h-1zM251 643h1v2h-1zM254 643h1v2h-1zM258 642h1v3h-1zM261 642h1v3h-1zM264 642h1v3h-1zM267 642h1v3h-1zM270 643h1v2h-1zM273 642h1v3h-1zM276 641h1v4h-1zM279 641h1v4h-1zM282 641h1v4h-1zM286 639h1v6h-1zM289 632h1v13h-1zM292 630h1v15h-1zM295 629h1v16h-1zM298 631h1v14h-1zM301 634h1v11h-1zM304 639h1v6h-1zM307 642h1v3h-1zM419 642h1v3h-1zM422 638h1v7h-1zM426 635h1v10h-1zM429 634h1v11h-1zM432 634h1v11h-1zM435 636h1v9h-1zM438 637h1v8h-1zM441 638h1v7h-1zM444 637h1v8h-1zM447 637h1v8h-1zM450 639h1v6h-1zM454 638h1v7h-1zM457 638h1v7h-1zM460 637h1v8h-1zM463 638h1v7h-1zM466 639h1v6h-1zM469 641h1v4h-1zM562 643h1v2h-1zM566 641h1v4h-1zM569 639h1v6h-1zM572 638h1v7h-1zM575 638h1v7h-1zM578 638h1v7h-1zM581 638h1v7h-1zM584 637h1v8h-1zM587 635h1v10h-1zM590 632h1v13h-1zM594 631h1v14h-1zM597 631h1v14h-1zM600 631h1v14h-1zM603 630h1v15h-1zM606 631h1v14h-1zM609 631h1v14h-1zM612 632h1v13h-1zM615 634h1v11h-1zM618 639h1v6h-1zM681 641h1v4h-1zM684 640h1v5h-1zM687 638h1v7h-1zM690 639h1v6h-1zM693 640h1v5h-1zM696 641h1v4h-1zM699 641h1v4h-1zM702 641h1v4h-1zM705 641h1v4h-1zM709 641h1v4h-1zM712 639h1v6h-1zM715 637h1v8h-1zM718 634h1v11h-1zM721 633h1v12h-1zM724 633h1v12h-1zM727 636h1v9h-1zM730 638h1v7h-1zM733 639h1v6h-1zM737 641h1v4h-1zM740 643h1v2h-1zM808 643h1v2h-1zM811 642h1v3h-1zM814 641h1v4h-1zM817 641h1v4h-1zM821 641h1v4h-1zM824 641h1v4h-1zM827 641h1v4h-1zM830 642h1v3h-1zM833 642h1v3h-1zM836 643h1v2h-1zM839 642h1v3h-1zM842 642h1v3h-1zM845 642h1v3h-1zM849 641h1v4h-1zM852 640h1v5h-1zM855 639h1v6h-1zM858 639h1v6h-1zM861 640h1v5h-1zM864 643h1v2h-1zM892 643h1v2h-1zM895 643h1v2h-1zM898 643h1v2h-1zM901 642h1v3h-1zM905 642h1v3h-1zM939 643h1v2h-1zM942 641h1v4h-1zM945 638h1v7h-1zM948 635h1v10h-1zM951 632h1v13h-1zM954 631h1v14h-1zM957 629h1v16h-1zM961 630h1v15h-1zM964 631h1v14h-1zM967 632h1v13h-1zM970 633h1v12h-1zM973 637h1v8h-1zM976 639h1v6h-1zM979 640h1v5h-1zM982 641h1v4h-1zM985 641h1v4h-1zM988 643h1v2h-1zM1035 642h1v3h-1zM1038 640h1v5h-1zM1041 638h1v7h-1zM1044 638h1v7h-1zM1048 639h1v6h-1zM1051 640h1v5h-1zM1054 640h1v5h-1zM1057 643h1v2h-1zM1091 643h1v2h-1zM1094 643h1v2h-1zM1097 642h1v3h-1zM1144 641h1v4h-1zM1147 639h1v6h-1zM1150 638h1v7h-1zM1153 637h1v8h-1zM1156 638h1v7h-1zM1160 639h1v6h-1zM1163 640h1v5h-1zM1166 641h1v4h-1zM1169 642h1v3h-1zM1172 643h1v2h-1z" fill="#ff0000"/>
<polyline points="70.0,633.1 77.6,634.4 85.1,638.1 91.4,644.4 97.7,649.4 103.9,657.0 110.2,665.8 116.5,675.8 121.5,682.1 126.5,683.8 132.8,682.8 140.3,679.6 147.9,677.0 152.9,672.0 156.6,667.0 160.4,663.2 165.4,659.5 171.7,659.5 176.7,658.2 183.0,655.2 188.0,654.5 193.0,656.2 198.1,656.5 203.1,654.5 208.1,651.2 213.1,648.7 218.1,646.9 223.2,643.2 228.2,640.1 233.2,638.6 238.2,638.1 245.7,638.6 250.8,640.7 255.8,639.4 260.8,638.1 268.3,637.6 275.9,635.6 282.1,634.4 287.2,629.4 292.2,624.3 295.9,621.1 299.7,620.1 304.7,621.8 311.0,624.3 316.0,625.6 321.0,629.4 326.1,633.1 332.3,633.1 338.6,633.1 344.9,631.4 351.2,634.4 357.4,635.6 363.7,638.1 370.0,643.2 375.0,645.7 380.1,646.9 385.1,647.7 390.1,648.2 395.1,648.2 400.1,650.7 405.2,652.7 410.2,653.7 413.9,654.5 417.7,651.9 422.7,647.7 427.8,644.4 432.8,641.9 437.8,640.1 442.8,638.1 447.8,636.9 452.9,635.6 457.9,633.6 462.9,633.1 467.9,633.1 472.9,635.1 478.0,636.9 483.0,640.7 488.0,644.4 493.0,648.2 498.0,653.2 503.1,655.7 508.1,657.0 513.1,657.5 518.1,657.7 523.1,658.7 528.2,660.2 533.2,662.0 538.2,663.2 543.2,664.0 548.2,663.2 553.3,663.2 558.3,663.7 563.3,662.0 568.3,658.7 573.3,655.7 578.4,654.5 583.4,652.7 588.4,650.2 593.4,645.7 598.4,643.2 603.5,640.7 608.5,637.6 613.5,635.1 617.3,635.6 621.0,639.4 626.0,642.7 631.1,644.4 636.1,645.2 641.1,646.2 646.1,645.7 651.1,648.2 656.2,651.9 661.2,653.2 666.2,653.2 675.0,653.2 680.0,650.7 685.1,647.7 690.1,646.9 695.1,646.2 700.1,646.2 705.1,645.7 710.2,644.4 715.2,640.7 720.2,636.9 724.0,634.9 729.0,634.4 734.0,635.1 739.0,636.1 744.0,638.6 749.1,641.9 754.1,645.2 759.1,646.9 764.1,648.2 769.1,649.4 774.2,649.4 779.2,650.2 784.2,648.9 789.2,648.7 794.2,648.7 799.3,650.2 804.3,649.4 809.3,648.9 814.3,647.7 819.3,646.4 824.4,646.9 829.4,646.4 834.4,645.7 839.4,645.2 844.4,643.9 849.5,643.2 854.5,641.2 859.5,640.7 864.5,642.4 869.5,643.2 874.6,643.2 879.6,644.4 884.6,645.2 889.6,643.9 894.6,642.7 899.7,642.4 904.7,641.9 909.7,642.7 914.7,643.2 919.7,641.9 925.0,641.9 930.0,641.9 935.0,641.9 940.1,640.7 945.1,636.9 948.8,632.6 952.6,629.4 957.6,626.8 962.7,624.3 967.7,621.8 971.4,621.1 975.2,623.1 980.2,623.6 987.8,623.6 995.3,624.3 1002.8,625.1 1007.8,626.8 1012.9,629.4 1017.9,631.9 1022.9,633.6 1026.7,633.6 1030.4,631.9 1035.4,628.9 1040.5,626.3 1045.5,624.8 1050.5,624.3 1054.3,623.6 1058.0,625.1 1061.8,626.3 1066.8,626.3 1071.8,628.9 1076.9,629.4 1081.9,628.1 1086.9,628.1 1091.9,626.8 1096.9,626.3 1102.0,627.3 1107.0,628.1 1112.0,630.6 1117.0,632.6 1122.0,635.1 1127.1,638.1 1130.8,641.2 1134.6,642.7 1138.4,640.7 1143.4,636.9 1148.4,633.9 1153.4,631.9 1158.4,630.6 1163.5,630.1 1169.7,630.1 1176.0,631.1 1182.3,631.9 1188.6,633.6 1194.8,635.1 1201.1,636.1 1207.4,636.9 1213.7,637.6 1219.9,638.6 1226.2,639.4 1232.5,639.6 1235.0,640.7" fill="none" stroke="#000000" stroke-width="1" shape-rendering="crispEdges"/>
<polyline points="70.0,636.9 77.6,635.6 85.1,636.1 91.4,638.1 97.7,643.2 103.9,648.2 110.2,654.5 116.5,662.0 122.8,669.5 129.0,674.5 135.3,677.5 142.8,677.5 150.4,677.5 156.6,674.5 162.9,669.5 169.2,665.8 175.5,663.2 181.7,660.7 188.0,658.2 194.3,657.0 200.6,656.5 206.8,654.5 213.1,651.9 219.4,649.4 225.7,646.2 231.9,643.2 238.2,641.9 244.5,640.7 250.8,640.1 258.3,639.4 265.8,638.6 273.4,638.1 280.9,636.9 287.2,634.4 293.4,630.6 298.5,627.3 303.5,625.6 311.0,625.1 316.0,625.6 321.0,626.8 326.1,628.1 332.3,629.4 338.6,630.6 344.9,631.9 351.2,632.6 357.4,633.6 363.7,635.1 370.0,637.6 375.0,640.7 380.1,642.7 385.1,644.4 390.1,645.7 395.1,646.9 400.1,648.2 405.2,649.4 410.2,650.7 415.2,651.2 420.2,650.2 425.2,648.7 430.3,646.9 435.3,645.2 440.3,643.2 445.3,641.9 450.3,640.1 455.4,638.6 460.4,636.9 465.4,635.6 470.4,635.1 475.4,635.1 480.5,635.6 485.5,637.6 490.5,640.1 495.5,643.2 500.5,646.9 505.6,650.2 510.6,652.7 515.6,654.5 520.6,655.7 525.6,657.0 530.7,658.7 535.7,660.2 540.7,661.5 545.7,662.5 550.7,662.7 555.8,662.7 560.8,662.5 565.8,662.0 570.8,660.7 575.8,658.7 580.9,657.0 585.9,655.0 590.9,652.7 595.9,650.2 600.9,647.7 606.0,645.2 611.0,642.7 616.0,640.7 621.0,640.1 626.0,641.2 631.1,642.4 636.1,643.2 641.1,644.4 646.1,645.2 651.1,646.2 656.2,648.2 661.2,650.2 666.2,651.2 675.0,651.7 680.0,651.2 685.1,649.9 690.1,648.9 695.1,648.2 700.1,647.4 705.1,646.7 710.2,645.7 715.2,643.9 720.2,641.9 725.2,639.9 730.2,638.1 735.3,637.4 740.3,637.4 745.3,638.1 750.3,639.4 755.3,641.2 760.4,643.2 765.4,644.9 770.4,646.4 775.4,647.7 780.4,648.7 785.5,648.9 790.5,648.9 795.5,648.9 800.5,649.4 805.5,649.4 810.6,648.9 815.6,648.2 820.6,647.4 825.6,647.2 830.6,646.7 835.7,646.2 840.7,645.7 845.7,644.9 850.7,643.9 855.7,643.2 860.8,642.4 865.8,642.7 870.8,643.2 875.8,643.7 880.8,644.2 885.9,644.4 890.9,643.9 895.9,643.2 900.9,642.7 905.9,642.4 911.0,642.7 916.0,642.7 921.0,642.4 925.0,642.4 930.0,642.4 935.0,642.4 940.1,641.9 945.1,640.1 950.1,637.6 955.1,634.9 960.1,631.9 965.2,629.4 970.2,627.3 975.2,625.6 980.2,624.8 987.8,624.3 995.3,624.3 1002.8,624.3 1007.8,625.1 1012.9,626.3 1017.9,627.6 1022.9,629.4 1027.9,630.1 1032.9,629.4 1038.0,628.1 1043.0,627.3 1048.0,626.1 1053.0,625.6 1058.0,625.1 1063.1,625.6 1068.1,626.3 1073.1,627.3 1078.1,627.6 1083.1,627.6 1088.2,627.6 1093.2,627.3 1098.2,627.1 1103.2,627.3 1108.2,627.6 1113.3,628.6 1118.3,629.9 1123.3,631.4 1128.3,633.6 1133.3,636.1 1138.4,637.6 1143.4,636.9 1148.4,635.6 1153.4,634.4 1158.4,633.1 1163.5,632.1 1169.7,631.4 1176.0,631.4 1182.3,631.9 1188.6,632.6 1194.8,633.6 1201.1,634.4 1207.4,635.1 1213.7,636.1 1219.9,636.9 1226.2,637.6 1232.5,638.6 1235.0,638.9" fill="none" stroke="#0000ff" stroke-width="1" shape-rendering="crispEdges"/>
<g font-family="Liberation Serif, serif" font-size="12" fill="#1a1a1a" shape-rendering="auto">
<text x="14.6" y="533.5" textLength="52.6" lengthAdjust="spacingAndGlyphs">1812.6570</text>
<text x="14.6" y="555.5" textLength="52.6" lengthAdjust="spacingAndGlyphs">244322643</text>
<text x="14.6" y="572.5" textLength="52.6" lengthAdjust="spacingAndGlyphs">162881762</text>
<text x="20.5" y="589.5" textLength="46.8" lengthAdjust="spacingAndGlyphs">81440881</text>
<text x="38.0" y="627.5" textLength="29.2" lengthAdjust="spacingAndGlyphs">38.36</text>
<text x="43.9" y="642.5" textLength="23.4" lengthAdjust="spacingAndGlyphs">9.12</text>
<text x="32.2" y="657.5" textLength="35.1" lengthAdjust="spacingAndGlyphs">-20.12</text>
<text x="32.2" y="672.5" textLength="35.1" lengthAdjust="spacingAndGlyphs">-49.36</text>
</g>
<g font-family="Liberation Serif, Noto Serif CJK SC, serif" font-size="12" fill="#0000ff" stroke="#0000ff" stroke-width=".3" shape-rendering="auto">
<text x="3.5" y="146" textLength="30.5" lengthAdjust="spacingAndGlyphs">日K线</text>
<text x="3" y="617" textLength="27.5" lengthAdjust="spacingAndGlyphs">MACD</text>
<text x="1140.5" y="154" font-size="14" textLength="38.5" lengthAdjust="spacingAndGlyphs">1A0001</text>
<text x="1189" y="155" font-size="14" textLength="56" lengthAdjust="spacingAndGlyphs">上证指数</text>
</g>
<g font-family="Liberation Sans, sans-serif" font-size="12" shape-rendering="auto">
<text x="75" y="617" fill="#000" textLength="50" lengthAdjust="spacingAndGlyphs">DIF=21.74</text>
<text x="146" y="617" fill="#0000ff" textLength="55" lengthAdjust="spacingAndGlyphs">DEA=14.62</text>
<text x="217" y="617" fill="#ff00ff" textLength="64" lengthAdjust="spacingAndGlyphs">MACD=14.24</text>
</g>
</svg>
</body></html>
